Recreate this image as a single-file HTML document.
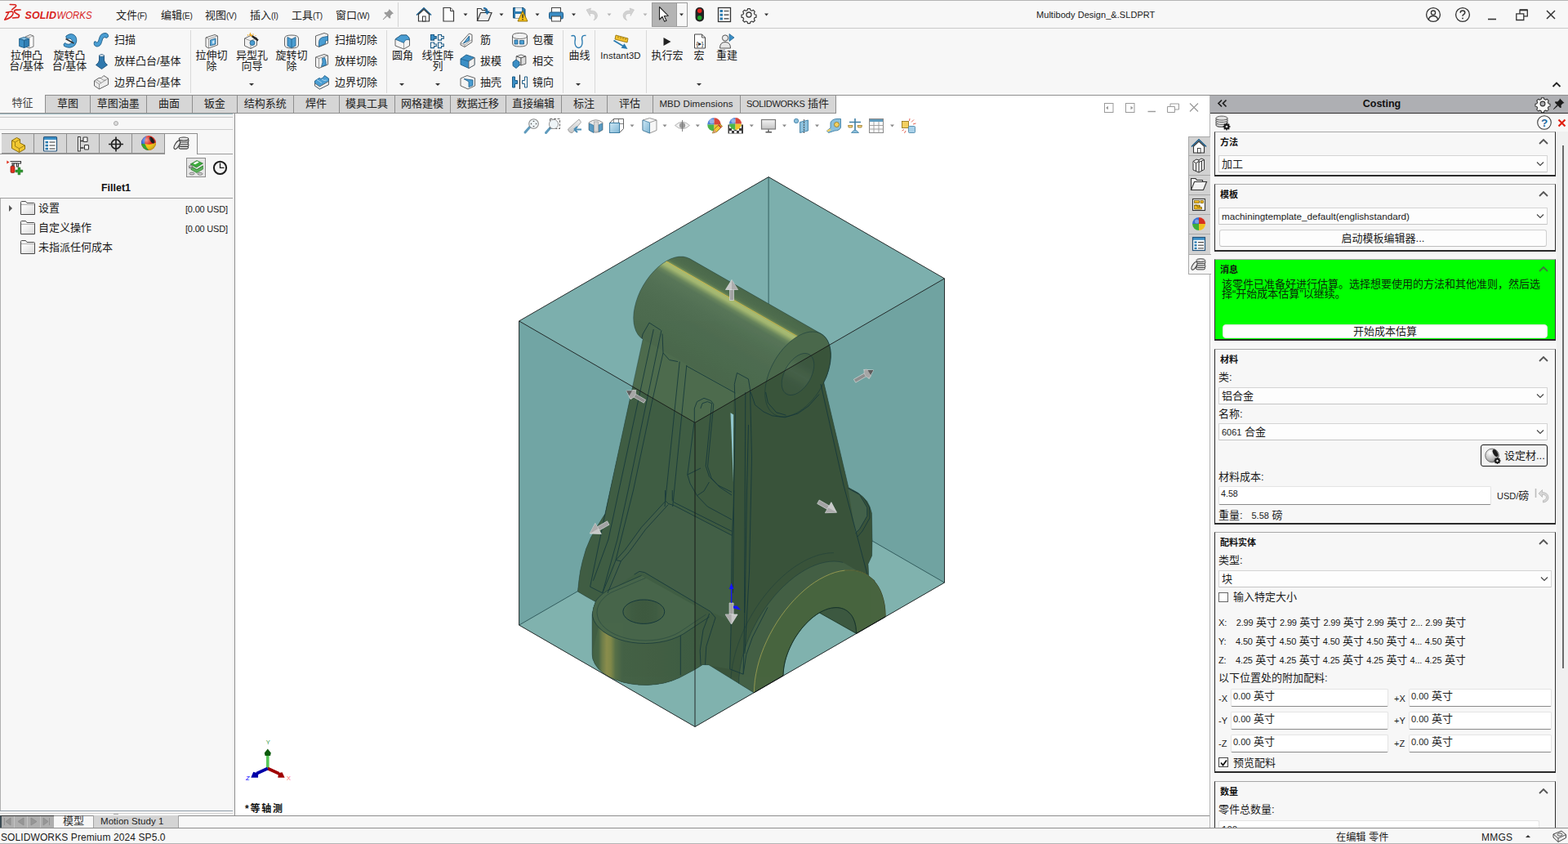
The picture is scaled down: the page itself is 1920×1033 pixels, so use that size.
<!DOCTYPE html>
<html lang="zh-CN">
<head>
<meta charset="utf-8">
<title>SOLIDWORKS Premium 2024 SP5.0 - Multibody Design_&amp;.SLDPRT</title>
<style>
*{box-sizing:border-box;margin:0;padding:0}
html,body{width:1920px;height:1033px;overflow:hidden;background:#f7f7f7}
body{position:relative;font-family:"Liberation Sans","Noto Sans CJK SC",sans-serif;font-size:13px;color:#1a1a1a;line-height:1}
.abs{position:absolute}
.t{position:absolute;white-space:nowrap;line-height:16px;height:16px}
.c{text-align:center}
svg{position:absolute;overflow:visible}
/* title bar */
#topline{left:0;top:0;width:1920px;height:1px;background:#b4b4b4}
#titlebar{left:0;top:1px;width:1920px;height:33px;background:#f7f7f7}
#tbline{left:0;top:34px;width:1920px;height:1px;background:#c9c9c9}
.menu{font-size:13px;top:11px}
.menu small{font-size:10px;letter-spacing:-0.3px}
/* ribbon */
#ribbon{left:0;top:35px;width:1920px;height:81px;background:#f7f7f7}
.vsep{position:absolute;width:1px;background:#d9d9d9;top:37px;height:77px}
.big{position:absolute;text-align:center;line-height:13px;font-size:13px;white-space:nowrap}
.sm{position:absolute;line-height:16px;font-size:13px;white-space:nowrap}
.dd{position:absolute;width:0;height:0;border-left:3px solid transparent;border-right:3px solid transparent;border-top:3.5px solid #333}
/* command tabs */
#tabrow{left:0;top:116px;width:1024px;height:23px;background:#f7f7f7}
.tab{position:absolute;top:116px;height:23px;background:#d6d6d6;border:1px solid #8e8e8e;border-left:none;font-size:13px;line-height:20px;text-align:center;white-space:nowrap;color:#222}
.tab.first{border-left:1px solid #8e8e8e}
.tab.act{background:#f7f7f7;border:none;color:#444}
</style>
</head>
<body>
<div class="abs" id="titlebar"></div>
<div class="abs" id="topline"></div>
<div class="abs" id="tbline"></div>
<!-- logo -->
<svg style="left:5px;top:4px" width="110" height="24" viewBox="0 0 110 24">
 <g fill="none" stroke="#d8211c" stroke-width="1.500" stroke-linecap="round" stroke-linejoin="round">
  <path d="M7.200 1.500 L13.500 1.800 Q15.300 2.100 14.400 3.900 L9.600 7.800"/>
  <path d="M2.400 11.300 L9.400 9.900 Q12 10.500 10.600 14 Q8 18.500 0.700 20.200 L5.900 11"/>
  <path d="M20 8 L14.500 8.200 Q12.300 8.600 12.600 10.600 Q13 11.800 18 14.200 Q19.200 15.500 17.500 17.300 L10.500 18" stroke-width="1.700"/>
 </g>
 <text x="25.5" y="18.800" font-family="Liberation Sans,sans-serif" font-size="13.2" font-weight="bold" font-style="italic" fill="#d8211c" letter-spacing="0.1" textLength="38.5" lengthAdjust="spacingAndGlyphs">SOLID</text>
 <text x="64.500" y="18.800" font-family="Liberation Sans,sans-serif" font-size="13.2" font-style="italic" fill="#d8211c" textLength="43" lengthAdjust="spacingAndGlyphs">WORKS</text>
</svg>
<!-- menus -->
<div class="t menu" style="left:142px">文件<small>(F)</small></div>
<div class="t menu" style="left:197px">编辑<small>(E)</small></div>
<div class="t menu" style="left:251px">视图<small>(V)</small></div>
<div class="t menu" style="left:306px">插入<small>(I)</small></div>
<div class="t menu" style="left:357px">工具<small>(T)</small></div>
<div class="t menu" style="left:411px">窗口<small>(W)</small></div>
<!-- pin -->
<svg style="left:468px;top:10px" width="15" height="15" viewBox="0 0 15 15"><g fill="#9a9a9a"><path d="M8.5 1 L14 6.5 L12.3 7 L10 9.3 L10.3 12.2 L8.8 12.4 L2.6 6.2 L2.8 4.7 L5.7 5 L8 2.7Z"/><path d="M5.2 9.2 L1 14 L5.8 9.8Z" stroke="#9a9a9a" stroke-width="1"/></g></svg>
<div class="abs" style="left:487px;top:3px;width:1px;height:30px;background:#d4d4d4"></div>
<!-- quick access icons -->
<svg style="left:0;top:0" width="960" height="35" viewBox="0 0 960 35">
 <!-- home -->
 <g fill="none" stroke="#1e5f8c" stroke-width="1.6" stroke-linejoin="miter"><path d="M510 18.5 L519 9.8 L528 18.5"/></g>
 <path d="M512.5 17.5 L519 11.5 L525.5 17.5 V26 H512.5Z" fill="#fff" stroke="#333" stroke-width="1.2"/>
 <rect x="517.5" y="20" width="3.6" height="6" fill="#fff" stroke="#333" stroke-width="1"/>
 <!-- new -->
 <path d="M543 9.5 H551.5 L555.5 13.5 V26 H543Z" fill="#fdfdfd" stroke="#3a3a3a" stroke-width="1.2"/>
 <path d="M551.5 9.5 V13.5 H555.5" fill="#e6e6e6" stroke="#3a3a3a" stroke-width="1"/>
 <path d="M567.5 16.5 h5 l-2.5 3z" fill="#333"/>
 <!-- open -->
 <path d="M584.5 25.5 V10.5 H589 L590.5 12.5 H596 V14" fill="#f4f4f4" stroke="#3a3a3a" stroke-width="1.2"/>
 <path d="M584.5 25.5 L588.5 15.5 H602 L598 25.5Z" fill="#ededed" stroke="#3a3a3a" stroke-width="1.2"/>
 <path d="M592 9 Q597 9 597.5 13.5 L600 13.5 L596.5 18 L593 13.5 L595.3 13.5 Q595 11 592 11Z" fill="#1f6aa0"/>
 <path d="M611.5 16.5 h5 l-2.5 3z" fill="#333"/>
 <!-- save w/ warning -->
 <path d="M628.5 9.5 H641 L643 11.5 V22 H628.5Z" fill="#2d7db3" stroke="#1e4e70" stroke-width="1"/>
 <rect x="631" y="9.5" width="8" height="4.5" fill="#e8eef2"/><rect x="631" y="17" width="9" height="5" fill="#f4f4f4"/>
 <path d="M640 13.5 L646 26 H634Z" fill="#f7c21a" stroke="#8a6a00" stroke-width="0.9"/>
 <rect x="639.4" y="17.5" width="1.3" height="4.5" fill="#222"/><rect x="639.4" y="23" width="1.3" height="1.4" fill="#222"/>
 <path d="M655.5 16.5 h5 l-2.5 3z" fill="#333"/>
 <!-- print -->
 <rect x="675.5" y="9.5" width="11" height="6" fill="#fafafa" stroke="#444" stroke-width="1"/>
 <rect x="672.5" y="15" width="17" height="8" rx="1.5" fill="#3a8cc4" stroke="#1d5a86" stroke-width="1"/>
 <rect x="675.5" y="20" width="11" height="6" fill="#fafafa" stroke="#444" stroke-width="1"/>
 <path d="M700 16.5 h5 l-2.5 3z" fill="#333"/>
 <!-- undo -->
 <path d="M718 12 L723.5 10 L722.5 13 Q731 12.5 731.5 19 Q731.5 23 727 25 Q729.5 22 728.5 19 Q727.5 16 722 16.5 L722.5 19.5Z" fill="#d2d2d2" stroke="#c0c0c0" stroke-width="0.6"/>
 <path d="M743.5 16.5 h5 l-2.5 3z" fill="#b5b5b5"/>
 <!-- redo -->
 <path d="M776.5 12 L771 10 L772 13 Q763.5 12.5 763 19 Q763 23 767.5 25 Q765 22 766 19 Q767 16 772.5 16.5 L772 19.5Z" fill="#d2d2d2" stroke="#c0c0c0" stroke-width="0.6"/>
 <path d="M787.5 16.5 h5 l-2.5 3z" fill="#b5b5b5"/>
 <!-- select -->
 <rect x="798.5" y="3.5" width="43" height="29" fill="#f7f7f7" stroke="#9c9c9c" stroke-width="1"/>
 <rect x="798.5" y="3.5" width="30" height="29" fill="#b4b4b4" stroke="#9c9c9c" stroke-width="1"/>
 <path d="M807.5 8.5 V24 L811 20.5 L813.7 26.3 L816 25.2 L813.3 19.5 L818.3 19.3Z" fill="#fff" stroke="#222" stroke-width="1.1" stroke-linejoin="round"/>
 <path d="M832 16.5 h5 l-2.5 3z" fill="#333"/>
 <!-- traffic light -->
 <rect x="851.5" y="9" width="10.5" height="17.5" rx="5" fill="#222"/>
 <circle cx="856.7" cy="13.3" r="2.7" fill="#e5231b"/><circle cx="856.7" cy="21.8" r="2.7" fill="#1fa52a"/>
 <!-- options list -->
 <rect x="879.5" y="9.5" width="15" height="17" fill="#fdfdfd" stroke="#333" stroke-width="1.3"/>
 <g fill="#2b7bb0"><rect x="881.5" y="12" width="3.5" height="3"/><rect x="881.5" y="16.7" width="3.5" height="3"/><rect x="881.5" y="21.4" width="3.5" height="3"/></g>
 <g stroke="#333" stroke-width="1.2"><path d="M886.5 13.5 h6 M886.5 18.2 h6 M886.5 22.9 h6"/></g>
 <!-- gear -->
 <g transform="translate(917 18)" fill="none" stroke="#3a3a3a" stroke-width="1.3">
  <path d="M-1.6 -8 h3.2 l.5 2.1 l1.8 .8 l1.9 -1.1 l2.2 2.2 l-1.1 1.9 l.8 1.8 l2.1 .5 v3.2 l-2.1 .5 l-.8 1.8 l1.1 1.9 l-2.2 2.2 l-1.9 -1.1 l-1.8 .8 l-.5 2.1 h-3.2 l-.5 -2.1 l-1.8 -.8 l-1.9 1.1 l-2.2 -2.2 l1.1 -1.9 l-.8 -1.8 l-2.1 -.5 v-3.2 l2.1 -.5 l.8 -1.8 l-1.1 -1.9 l2.2 -2.2 l1.9 1.1 l1.8 -.8z" stroke-linejoin="round" transform="scale(0.92)"/>
  <circle r="3"/>
 </g>
 <path d="M936 16.5 h5 l-2.5 3z" fill="#333"/>
</svg>
<!-- doc title -->
<div class="t" style="left:1269px;top:10px;font-size:11px;letter-spacing:0.05px">Multibody Design_&amp;.SLDPRT</div>
<!-- window controls -->
<svg style="left:1740px;top:0" width="180" height="35" viewBox="0 0 180 35" fill="none" stroke="#333" stroke-width="1.3">
 <circle cx="15" cy="18" r="8.400"/><circle cx="15" cy="15.6" r="2.6"/><path d="M9.300 24 Q10.300 19.500 15 19.500 Q19.700 19.500 20.700 24"/>
 <circle cx="51" cy="18" r="8.400"/>
 <path d="M48.2 15.7 Q48.2 13 51 13 Q53.8 13 53.8 15.4 Q53.8 17 52 17.8 Q51 18.3 51 19.8" stroke-width="1.5"/><circle cx="51" cy="22.4" r="0.9" fill="#333" stroke="none"/>
 <path d="M82 23.5 h10" stroke-width="1.6"/>
 <path d="M116.800 16.800 h9 v7.700 h-9z M121 16.500 v-4.300 h9.300 v7.600 h-4.300" stroke-width="1.300"/><path d="M121 12.300 h9.300" stroke-width="2"/>
 <path d="M154 13 l10 10 M164 13 l-10 10" stroke-width="1.5"/>
</svg>
<div class="abs" id="ribbon"></div>
<div class="vsep" style="left:233px"></div>
<div class="vsep" style="left:473px"></div>
<div class="vsep" style="left:689px"></div>
<div class="vsep" style="left:728px"></div>
<div class="vsep" style="left:791px"></div>
<div class="big" style="left:-7.5px;width:80px;top:61px">拉伸凸<br>台/基体</div>
<div class="big" style="left:45.0px;width:80px;top:61px">旋转凸<br>台/基体</div>
<div class="sm" style="left:140px;top:40.5px">扫描</div>
<div class="sm" style="left:140px;top:66.5px">放样凸台/基体</div>
<div class="sm" style="left:140px;top:92.5px">边界凸台/基体</div>
<div class="big" style="left:219.0px;width:80px;top:61px">拉伸切<br>除</div>
<div class="big" style="left:268.5px;width:80px;top:61px">异型孔<br>向导</div>
<div class="big" style="left:317.0px;width:80px;top:61px">旋转切<br>除</div>
<div class="dd" style="left:305px;top:102px"></div>
<div class="sm" style="left:410px;top:40.5px">扫描切除</div>
<div class="sm" style="left:410px;top:66.5px">放样切除</div>
<div class="sm" style="left:410px;top:92.5px">边界切除</div>
<div class="big" style="left:453.0px;width:80px;top:61px">圆角</div>
<div class="dd" style="left:489px;top:102px"></div>
<div class="big" style="left:496.0px;width:80px;top:61px">线性阵<br>列</div>
<div class="dd" style="left:532.5px;top:102px"></div>
<div class="sm" style="left:588px;top:40.5px">筋</div>
<div class="sm" style="left:588px;top:66.5px">拔模</div>
<div class="sm" style="left:588px;top:92.5px">抽壳</div>
<div class="sm" style="left:652px;top:40.5px">包覆</div>
<div class="sm" style="left:652px;top:66.5px">相交</div>
<div class="sm" style="left:652px;top:92.5px">镜向</div>
<div class="big" style="left:669.5px;width:80px;top:61px">曲线</div>
<div class="dd" style="left:705px;top:102px"></div>
<div class="big" style="left:720px;width:80px;top:62px;font-size:11.3px;letter-spacing:0.1px">Instant3D</div>
<div class="big" style="left:777.0px;width:80px;top:61px">执行宏</div>
<div class="big" style="left:816.0px;width:80px;top:61px">宏</div>
<div class="dd" style="left:853px;top:102px"></div>
<div class="big" style="left:850.0px;width:80px;top:61px">重建</div>
<svg style="left:1899px;top:98px" width="14" height="10" viewBox="0 0 14 10"><path d="M2.5 8 L7 3.5 L11.5 8" fill="none" stroke="#222" stroke-width="1.8"/></svg>
<svg style="left:0;top:0" width="960" height="116" viewBox="0 0 960 116"><path d="M31 45 L37 42.5 L41 44 V57 L36 59 L31 57Z" fill="#fafafa" stroke="#666" stroke-width="0.9" stroke-linejoin="round"/><path d="M36 45.5 V59 M31 45 L36 45.5 L41 44" fill="none" stroke="#888" stroke-width="0.7"/><polygon points="29.5,45.5 35.35,47.46625 29.5,49.4325 23.65,47.46625" fill="#8cc4e6" stroke="#1d5c87" stroke-width="0.9" stroke-linejoin="round"/><polygon points="23.65,47.46625 29.5,49.4325 29.5,58.5 23.65,56.53375" fill="#3b8fc6" stroke="#1d5c87" stroke-width="0.9" stroke-linejoin="round"/><polygon points="35.35,47.46625 29.5,49.4325 29.5,58.5 35.35,56.53375" fill="#2f7fb5" stroke="#1d5c87" stroke-width="0.9" stroke-linejoin="round"/><path d="M81 44 Q88 39 92.5 44.5 Q95.5 50 91.5 55.5 Q86 60.5 78.5 56.5 Q77 54 79.5 52.5 Q84 56 87.5 52.5 Q89.5 49.5 87 47.5 Q84.5 46.5 82.5 47.5 Q80 46 81 44Z" fill="#4a9dd2" stroke="#1d5c87" stroke-width="0.9"/><path d="M80.5 47.5 L90.5 53" stroke="#333" stroke-width="1.5"/><path d="M115.5 51 Q114 56 118.5 57 Q123 57 124.5 51.5 Q125.5 45.5 128 45.5 Q131 47.5 132.5 45 Q133 41 129 40.5 Q123 40.5 121.5 47 Q120.5 52.5 118.5 52 Q117 50 115.5 51Z" fill="#4a9dd2" stroke="#1d5c87" stroke-width="0.9"/><path d="M121.5 68 Q124.5 65.5 127.5 68 V74 Q128 77 131.5 79.5 L124.5 84.5 L117.5 79.5 Q121 77 121.5 74Z" fill="#2f78ad" stroke="#1d4f77" stroke-width="0.9"/><ellipse cx="124.5" cy="68" rx="3" ry="1.3" fill="#e8eef2" stroke="#1d4f77" stroke-width="0.6"/><path d="M115.5 99 L121 95.5 Q124 97 127 92.5 L132.5 96 V103.5 L121.5 109 L115.5 105Z" fill="#ececec" stroke="#555" stroke-width="0.9" stroke-linejoin="round"/><path d="M115.5 99 L121.5 103 L132.5 96 M121.5 103 V109 M118 97.5 L124 101.5 M124 96.5 Q127 99 129.5 98" fill="none" stroke="#777" stroke-width="0.7"/><path d="M252 46 L263 42.5 L266.5 44 V55 L255.5 59 L252 57Z" fill="#f4f4f4" stroke="#555" stroke-width="0.9" stroke-linejoin="round"/><path d="M255.5 47.5 L266.5 44 M255.5 47.5 V59 M252 46 L255.5 47.5" fill="none" stroke="#777" stroke-width="0.7"/><path d="M257.5 49 L264 47 V54 L257.5 56Z" fill="#5aa7d8" stroke="#1d5c87" stroke-width="0.8"/><path d="M260 50 L262.5 49.3 V53 L260 53.7Z" fill="#cfe6f5"/><path d="M299.5 47 L307 43.5 L314.5 46.5 V55.5 L307 59.5 L299.5 56Z" fill="#f1f1f1" stroke="#555" stroke-width="0.9" stroke-linejoin="round"/><path d="M299.5 47 L307 50 L314.5 46.5 M307 50 V59.5" fill="none" stroke="#777" stroke-width="0.7"/><circle cx="309" cy="52.5" r="3" fill="#4a9dd2" stroke="#1d5c87" stroke-width="0.8"/><path d="M308.5 44 L316 49.5" stroke="#222" stroke-width="2.2"/><path d="M305.5 41.8 L308.8 44.2" stroke="#e9a21b" stroke-width="2.2"/><g fill="#e9a21b"><circle cx="303.5" cy="43" r="0.8"/><circle cx="306.5" cy="40.8" r="0.7"/><circle cx="310" cy="42" r="0.7"/><circle cx="313" cy="43.5" r="0.6"/></g><path d="M348.5 47 Q348.5 43 357 43 Q365.5 43 365.5 47 V55 Q365.5 59 357 59 Q348.5 59 348.5 55Z" fill="#f1f1f1" stroke="#555" stroke-width="0.9"/><path d="M352 45.5 L357 48 L362 45.5 V56 L357 58.5 L352 56Z" fill="#4a9dd2" stroke="#1d5c87" stroke-width="0.8"/><path d="M357 48 V58.5" stroke="#1d5c87" stroke-width="0.8"/><path d="M386.5 44 L397 40.5 L401.5 42 V53 L390.5 57.5 L386.5 55.5Z" fill="#f1f1f1" stroke="#555" stroke-width="0.9" stroke-linejoin="round"/><path d="M390.5 57 V52 Q390.5 45.5 398 45 L401.5 44.5 V49.5 L398.5 50 V53.5Z" fill="#4a9dd2" stroke="#1d5c87" stroke-width="0.8"/><path d="M386.5 70 L397 66.5 L401.5 68 V79 L390.5 83.5 L386.5 81.5Z" fill="#f1f1f1" stroke="#555" stroke-width="0.9" stroke-linejoin="round"/><path d="M390.5 71.5 V83.5 M386.5 70 L390.5 71.5 L401.5 68" fill="none" stroke="#777" stroke-width="0.7"/><path d="M393.5 81.5 Q396 76 394.5 71.5 L397.5 70.5 Q399.5 75 399.5 79.5Z" fill="#4a9dd2" stroke="#1d5c87" stroke-width="0.8"/><path d="M385.5 99 L391 95.5 Q394 98 397.5 92.5 L402.5 96 V103.5 L391.5 109 L385.5 105Z" fill="#4a9dd2" stroke="#1d5c87" stroke-width="0.9" stroke-linejoin="round"/><path d="M385.5 102 L391.5 106 L402.5 99.5 V103.5 L391.5 109 L385.5 105Z" fill="#f1f1f1" stroke="#555" stroke-width="0.8" stroke-linejoin="round"/><path d="M388 97.5 L394 101.5 M394 97 Q397 99.5 400 98" fill="none" stroke="#bfe0f3" stroke-width="0.8"/><path d="M484 48 L491 43 H498 Q501.5 45.5 501.5 49 V56 L494.5 60 L484 56Z" fill="#f4f4f4" stroke="#555" stroke-width="0.9" stroke-linejoin="round"/><path d="M484 48 L491 43 H498 Q501.5 45.5 501.5 49 Q496 47 494.5 52.5 L484 48Z" fill="#4a9dd2" stroke="#1d5c87" stroke-width="0.8" stroke-linejoin="round"/><path d="M494.5 52.5 V60" stroke="#777" stroke-width="0.7"/><g fill="#fafafa" stroke="#1d5c87" stroke-width="1.1" stroke-linejoin="miter"><path d="M536.5 42.5 h4 v2 h2.8 v2.6 h-2.8 v2 h-4z M527.5 52 h4 v2 h2.8 v2.6 h-2.8 v2 h-4z M536.5 52 h4 v2 h2.8 v2.6 h-2.8 v2 h-4z"/></g><path d="M527.5 42.5 h4 v2 h2.8 v2.6 h-2.8 v2 h-4z" fill="#3b8fc6" stroke="#1d5c87" stroke-width="1.1"/><path d="M564 52.500 L574.500 41 L578 42.500 V51.500 L569 57.500 L564 55Z" fill="#f1f1f1" stroke="#555" stroke-width="0.9" stroke-linejoin="round"/><path d="M564 52.500 L569 55 V57.500 M569 55 L578 48.500" fill="none" stroke="#777" stroke-width="0.700"/><path d="M567.500 53 L574.500 44 V49.500Z" fill="#5aa7d8" stroke="#1d5c87" stroke-width="0.900"/><path d="M564 72 L571 67 L581 70.5 V79.5 L574 83.5 L564 79Z" fill="#3b8fc6" stroke="#1d5c87" stroke-width="0.9" stroke-linejoin="round"/><path d="M574 75 L581 70.5 V79.5 L574 83.5Z" fill="#f1f1f1" stroke="#555" stroke-width="0.8"/><path d="M564 72 L574 75" stroke="#1d5c87" stroke-width="0.8"/><path d="M564 96 L572 92.5 L581.5 95.5 V105 L573 109 L564 105Z" fill="#f4f4f4" stroke="#555" stroke-width="0.9" stroke-linejoin="round"/><path d="M568 96.5 L579 98 V104.5 L574 106.5 V100Z" fill="#4a9dd2" stroke="#1d5c87" stroke-width="0.8"/><path d="M627.5 44 Q627.5 40.5 636.5 40.5 Q645.5 40.5 645.5 44 V53 Q645.5 57 636.5 57 Q627.5 57 627.5 53Z" fill="#f1f1f1" stroke="#555" stroke-width="0.9"/><path d="M627.5 44 Q627.5 47.5 636.5 47.5 Q645.5 47.5 645.5 44" fill="none" stroke="#555" stroke-width="0.8"/><path d="M630 49 h4 v5 h-4z M636.5 49.5 h5 v4.5 h-5z" fill="#4a9dd2" stroke="#1d5c87" stroke-width="0.8"/><polygon points="638,67.0 643.85,68.96625 638,70.9325 632.15,68.96625" fill="#fafafa" stroke="#555" stroke-width="0.9" stroke-linejoin="round"/><polygon points="632.15,68.96625 638,70.9325 638,80.0 632.15,78.03375" fill="#e9e9e9" stroke="#555" stroke-width="0.9" stroke-linejoin="round"/><polygon points="643.85,68.96625 638,70.9325 638,80.0 643.85,78.03375" fill="#dcdcdc" stroke="#555" stroke-width="0.9" stroke-linejoin="round"/><path d="M628 76 L632 73 L636 76 V80 L632 83.5 L628 80.5Z" fill="#3b8fc6" stroke="#1d5c87" stroke-width="0.9"/><path d="M636.5 91.5 V109" stroke="#222" stroke-width="1.1"/><path d="M627.5 94 h3 v4.500 h3 v4 h-3 v4.500 h-3z" fill="#3b8fc6" stroke="#1d5c87" stroke-width="1"/><path d="M645.5 94 h-3 v4.500 h-3 v4 h3 v4.500 h3z" fill="#f2f2f2" stroke="#1d5c87" stroke-width="1"/><path d="M699.5 44 Q704.5 42 704.5 47.5 Q703 54 705.5 57 Q708.5 60 711.5 57 Q714 54 712.5 47.5 Q712.5 42.5 717.5 43.5" fill="none" stroke="#2b7bb0" stroke-width="1.4"/><path d="M754 43 L769 47 L768 52 L753 48Z" fill="#f4c430" stroke="#8a6a00" stroke-width="0.8"/><path d="M757 44.5 v2 M760 45.3 v2 M763 46.1 v2 M766 46.9 v2" stroke="#6b5200" stroke-width="0.7"/><path d="M751.5 49.5 L764 57" stroke="#2b7bb0" stroke-width="1.8"/><path d="M768.5 60 L760.5 58.8 L764.5 53.2Z" fill="#2b7bb0"/><path d="M812.5 46 L821.5 51 L812.5 56Z" fill="#222"/><path d="M850.5 42 H859.5 L863.5 46 V59 H850.5Z" fill="#fdfdfd" stroke="#444" stroke-width="1"/><path d="M859.5 42 V46 H863.5" fill="none" stroke="#444" stroke-width="0.9"/><text x="857" y="55.5" font-family="Liberation Sans,sans-serif" font-size="7.500" text-anchor="middle" fill="#222">{&#9656;}</text><circle cx="888" cy="46.5" r="3.6" fill="#ececec" stroke="#555" stroke-width="1"/><path d="M881.5 59 Q881.5 51.5 888 51.5 Q894.5 51.5 894.5 59Z" fill="#e6e6e6" stroke="#555" stroke-width="1"/><path d="M893 41.5 L899 46 L893 50.5Z" fill="#3b8fc6" stroke="#1d5c87" stroke-width="0.7"/></svg>
<div class="abs" id="tabrow"></div>
<div class="tab act" style="left:0px;width:55px">特征</div>
<div class="tab first" style="left:55px;width:56px">草图</div>
<div class="tab" style="left:111px;width:68.5px">草图油墨</div>
<div class="tab" style="left:179.5px;width:56.0px">曲面</div>
<div class="tab" style="left:235.5px;width:55.5px">钣金</div>
<div class="tab" style="left:291px;width:68.5px">结构系统</div>
<div class="tab" style="left:359.5px;width:56.0px">焊件</div>
<div class="tab" style="left:415.5px;width:68.0px">模具工具</div>
<div class="tab" style="left:483.5px;width:68.0px">网格建模</div>
<div class="tab" style="left:551.5px;width:68.0px">数据迁移</div>
<div class="tab" style="left:619.5px;width:68.0px">直接编辑</div>
<div class="tab" style="left:687.5px;width:56.0px">标注</div>
<div class="tab" style="left:743.5px;width:56.0px">评估</div>
<div class="tab" style="left:799.5px;width:107.0px;font-size:11.5px;letter-spacing:0.1px">MBD Dimensions</div>
<div class="tab" style="left:906.5px;width:117.0px;font-size:13px"><span style="font-size:11px;letter-spacing:-0.3px">SOLIDWORKS</span> 插件</div>
<div class="abs" style="left:0;top:138px;width:56px;height:1px;background:#8e8e8e"></div>
<!-- left panel -->

<div class="abs" style="left:0;top:139px;width:288px;height:859px;background:#f7f7f7"></div>
<div class="abs" style="left:0;top:139px;width:286px;height:1px;background:#9fbcc4"></div><div class="abs" style="left:0;top:140px;width:286px;height:3px;background:#f2f2f2"></div><div class="abs" style="left:0;top:143px;width:285px;height:1px;background:#c6c6c6"></div>
<div class="abs" style="left:287px;top:139px;width:1px;height:859px;background:#909090"></div><div class="abs" style="left:285px;top:139px;width:2px;height:859px;background:#efefef"></div>
<div class="abs" style="left:139px;top:148px;width:6px;height:6px;border-radius:50%;border:1px solid #a8a8a8;background:#dcdcdc"></div>
<div class="abs" style="left:0;top:158px;width:285px;height:1px;background:#cdcdcd"></div>
<!-- manager tabs -->
<div class="abs" style="left:0;top:188px;width:285px;height:1px;background:#9a9a9a"></div>
<div class="abs" style="left:2px;top:163px;width:200px;height:25px;background:#d6d6d6;border-top:1px solid #8a8a8a;border-bottom:1px solid #8e8e8e"></div>
<div class="abs" style="left:41px;top:164px;width:1px;height:24px;background:#8e8e8e"></div>
<div class="abs" style="left:81px;top:164px;width:1px;height:24px;background:#8e8e8e"></div>
<div class="abs" style="left:121px;top:164px;width:1px;height:24px;background:#8e8e8e"></div>
<div class="abs" style="left:161px;top:164px;width:1px;height:24px;background:#8e8e8e"></div>
<div class="abs" style="left:201px;top:163px;width:41px;height:26px;background:#f7f7f7;border:1px solid #8e8e8e;border-bottom:none"></div>
<svg style="left:0;top:160px" width="288" height="60" viewBox="0 160 288 60">
 <!-- feature tree icon (yellow part) -->
 <path d="M14.5 172 L20.5 168.5 L24.5 170.5 V175 L30.5 178 V182.5 L23.5 186.5 L14.5 181.5Z" fill="#f2c832" stroke="#8a6d10" stroke-width="1" stroke-linejoin="round"/>
 <path d="M14.5 172 L18.5 174 L24.5 170.5 M18.5 174 V179 L23.5 181.8 L30.5 178 M23.5 181.8 V186.5" fill="none" stroke="#8a6d10" stroke-width="0.8"/>
 <!-- property manager -->
 <rect x="53.5" y="167.5" width="16" height="17.5" rx="1" fill="#fdfdfd" stroke="#23527a" stroke-width="1.2"/>
 <rect x="54" y="168" width="15" height="3" fill="#3b8fc6"/>
 <g fill="#2b7bb0"><rect x="55.5" y="172.8" width="3.5" height="2.6"/><rect x="55.5" y="176.8" width="3.5" height="2.6"/><rect x="55.5" y="180.8" width="3.5" height="2.6"/></g>
 <path d="M60.5 174 h7 M60.5 178 h7 M60.5 182 h7" stroke="#333" stroke-width="1.1"/>
 <!-- config manager -->
 <rect x="95.500" y="167.500" width="2.800" height="17.500" fill="#fdfdfd" stroke="#333" stroke-width="1"/>
 <path d="M98.500 172.500 h4 M98.500 181 h4" stroke="#333" stroke-width="1.600"/>
 <g fill="#fafafa" stroke="#333" stroke-width="1.100"><rect x="102" y="168" width="5" height="5.500" rx="0.800"/><rect x="103.500" y="177.500" width="5" height="5.500" rx="0.800"/></g>
 <!-- dimxpert -->
 <g fill="none" stroke="#222" stroke-width="1.7"><circle cx="142" cy="176.5" r="5.6"/><path d="M142 167.500 v18 M133 176.500 h18"/></g>
 <!-- display manager -->
 <defs><radialGradient id="ballg" cx="0.35" cy="0.3" r="0.75"><stop offset="0" stop-color="#fff" stop-opacity="0.55"/><stop offset="0.5" stop-color="#fff" stop-opacity="0"/><stop offset="1" stop-color="#000" stop-opacity="0.25"/></radialGradient><clipPath id="ballc"><circle cx="182" cy="175" r="9"/></clipPath></defs>
 <g clip-path="url(#ballc)"><rect x="172" y="165" width="20" height="20" fill="#e02418"/>
 <path d="M172 165 H180 Q176.500 171 177.500 176 H172Z" fill="#2a62d8"/>
 <path d="M172 176 H177.500 Q179 181 184 185 H172Z" fill="#2aa52a"/>
 <path d="M177.500 176 Q184 178 192 174 V186 H184 Q179 181 177.500 176Z" fill="#f2c410"/></g>
 <ellipse cx="186" cy="171.500" rx="2.300" ry="4.600" transform="rotate(-35 186 171.500)" fill="#161616"/>
 <circle cx="182" cy="175" r="9" fill="url(#ballg)"/>
 <!-- costing icon -->
 <g fill="#e9e9e9" stroke="#3a3a3a" stroke-width="1.100"><rect x="219" y="178.500" width="11.500" height="3.600" rx="1.800"/><rect x="219.500" y="175.800" width="11.500" height="3.600" rx="1.800"/><rect x="219" y="173.100" width="11.500" height="3.600" rx="1.800"/><rect x="219.500" y="170.400" width="11.500" height="3.600" rx="1.800"/><ellipse cx="225" cy="170" rx="5.800" ry="2"/><ellipse cx="216.800" cy="177.300" rx="2.400" ry="5.800" transform="rotate(32 216.800 177.300)"/></g>
 <!-- fire/add icon -->
 <path d="M8.300 196.500 L11.500 198.500 L8.300 200.500Z" fill="#e0301e"/>
 <path d="M12.500 197.500 H25.500 V200 H22.500 V204 H20.500 V200 H17 V203.500 M14 199.800 h8" fill="none" stroke="#333" stroke-width="1.1"/>
 <rect x="13" y="203" width="5" height="8.500" rx="1.500" fill="#e0301e" stroke="#7a1a10" stroke-width="0.700"/><rect x="14.500" y="200.500" width="2" height="2.800" fill="#444"/>
 <path d="M19 208 h3 v-3 h2.800 v3 h3 v2.800 h-3 v3 h-2.800 v-3 h-3z" fill="#2a9a2a" stroke="#176317" stroke-width="0.500"/>
 <!-- money button -->
 <rect x="228.500" y="193.500" width="23" height="23" fill="#e6e6e6" stroke="#8c8c8c" stroke-width="1"/>
 <g><path d="M233 201 L241 196.500 L248.500 200 L240.500 205Z" fill="#3dab3d" stroke="#1c6a1c" stroke-width="0.600"/><path d="M236.500 200 L241.300 197.300 L243.800 198.500 L239 201.300Z" fill="#fff"/>
 <path d="M234 203.500 L241 207.500 L248.500 202.800 V207 L241 211.500 L234 207.500Z" fill="#2f9a2f" stroke="#1c6a1c" stroke-width="0.600"/>
 <path d="M234.500 205.200 L241 209 L248.500 204.500 M234.500 206.700 L241 210.500 L248.500 206" fill="none" stroke="#b6e0b6" stroke-width="0.500"/>
 <g fill="#d9d9d9" stroke="#555" stroke-width="0.700"><ellipse cx="235" cy="212.500" rx="3" ry="1.400"/><ellipse cx="245" cy="212.800" rx="3" ry="1.400"/><ellipse cx="233.500" cy="205" rx="2.200" ry="1.100"/><ellipse cx="233.500" cy="203.500" rx="2.200" ry="1.100"/></g></g>
 <!-- clock -->
 <circle cx="269.500" cy="205.300" r="8.600" fill="#000" opacity="0.150"/><circle cx="269.500" cy="205.300" r="7.600" fill="#f4f4f4" stroke="#1c1c1c" stroke-width="2"/><path d="M269.500 199.500 V205.300 H274.500" fill="none" stroke="#1c1c1c" stroke-width="1.300"/>
</svg>
<div class="t c" style="left:42px;width:200px;top:222px;font-weight:bold;font-size:12.5px;color:#111">Fillet1</div>
<div class="abs" style="left:0;top:242px;width:285px;height:1px;background:#9e9e9e"></div>
<div class="abs" style="left:0;top:243px;width:1px;height:750px;background:#b0b0b0"></div>
<!-- tree -->
<svg style="left:0;top:243px" width="288" height="75" viewBox="0 243 288 75">
 <path d="M11 251 L15 255 L11 259Z" fill="#555"/>
 <g id="fold"><path d="M25.500 262.500 V247.500 Q25.500 246.500 26.500 246.500 H31.500 L33 248.500 H41.500 Q42.500 248.500 42.500 249.500 V262.500Z" fill="#f4f4f4" stroke="#4a4a4a" stroke-width="1" stroke-linejoin="round"/><path d="M26 250.500 H42" stroke="#9a9a9a" stroke-width="0.800"/><rect x="26.200" y="251" width="15.800" height="11" fill="url(#fg)"/></g>
 <defs><linearGradient id="fg" x1="0" y1="0" x2="1" y2="1"><stop offset="0" stop-color="#ffffff"/><stop offset="1" stop-color="#dadada"/></linearGradient></defs>
 <use href="#fold" y="24"/><use href="#fold" y="48"/>
</svg>
<div class="t" style="left:47px;top:247px">设置</div>
<div class="t" style="left:47px;top:271px">自定义操作</div>
<div class="t" style="left:47px;top:295px">未指派任何成本</div>
<div class="t" style="left:227px;top:248px;font-size:11px;letter-spacing:-0.2px">[0.00 USD]</div>
<div class="t" style="left:227px;top:272px;font-size:11px;letter-spacing:-0.2px">[0.00 USD]</div>
<!-- bottom of panel -->
<div class="abs" style="left:0;top:992px;width:285px;height:1px;background:#8d9aa6"></div>
<div class="abs" style="left:0;top:995px;width:285px;height:1px;background:#d0d0d0"></div>
<div class="abs" style="left:139px;top:996px;width:6px;height:1px;background:#aaa"></div>
<!-- bottom tabs row -->
<div class="abs" style="left:0;top:998px;width:1482px;height:1px;background:#8e8e8e"></div>
<div class="abs" style="left:0;top:999px;width:1482px;height:14px;background:#f7f7f7"></div>
<div class="abs" style="left:0px;top:998px;width:66px;height:15px;background:#aeaeae;border-top:1px solid #3a3a3a;border-left:2px solid #3a4a52"></div>
<svg style="left:0;top:998px" width="70" height="15" viewBox="0 0 70 15"><g fill="#969696" stroke="#8a8a8a" stroke-width="0.800"><path d="M5.500 3 v9 M13 3 L7 7.500 L13 12Z"/><path d="M29 3 L22 7.500 L29 12Z"/><path d="M38 3 L45 7.500 L38 12Z"/><path d="M53 3 L59 7.500 L53 12Z M60.500 3 v9"/></g><path d="M17.500 1 v14 M33.500 1 v14 M49.500 1 v14" stroke="#c4c4c4" stroke-width="1"/></svg>
<div class="abs c" style="left:66px;top:998px;width:48px;height:15px;line-height:14px;font-size:13px;color:#333">模型</div>
<div class="abs" style="left:114px;top:998px;width:105px;padding-left:8px;height:16px;line-height:14px;font-size:11.5px;background:#d4d4d4;border:1px solid #a3a3a3;border-top:none;color:#222;letter-spacing:0.05px">Motion Study 1</div>
<div class="abs" style="left:1023px;top:116px;width:897px;height:1px;background:#8e8e8e"></div>
<div class="abs" id="vp" style="left:288px;top:139px;width:1193px;height:859px;background:#fff"></div>
<div class="abs" style="left:1024px;top:117px;width:457px;height:22px;background:#fff"></div>
<svg style="left:288px;top:139px" width="1193" height="858" viewBox="288 139 1193 858">
<defs>
<clipPath id="sil"><path d="M844.5 316.6 L840.5 314.9 L836.2 314.1 L831.4 314.1 L826.4 315.0 L821.3 316.8 L816.0 319.5 L810.7 322.9 L805.6 327.1 L800.6 331.9 L795.9 337.3 L791.5 343.2 L787.5 349.6 L784.0 356.1 L781.1 362.9 L778.8 369.7 L777.1 376.4 L776.0 383.0 L775.7 389.3 L776.0 395.1 L777.1 400.5 L778.8 405.3 L781.1 409.4 L784.0 412.8 L787.5 415.4 L787.0 416.0 L740.8 629.0 L732.0 643.0 L723.4 658.0 L717.5 672.0 L713.2 687.0 L710.5 699.0 L708.9 710.3 L707.4 724.0 L718.0 730.3 L729.2 736.5 L726.6 744.0 L725.0 752.4 L725.0 800.5 L725.8 806.6 L728.4 812.6 L732.5 818.2 L738.1 823.4 L745.1 828.0 L753.2 831.8 L762.3 834.9 L772.1 837.0 L782.4 838.2 L792.9 838.5 L803.3 837.7 L813.4 836.0 L822.8 833.3 L831.4 829.8 L850.0 820.0 L860.5 813.5 L868.0 813.8 L923.0 847.8 L958.4 826.9 L959.0 827.1 L959.3 821.6 L960.0 815.8 L961.2 809.9 L962.9 803.9 L965.0 797.9 L967.6 791.9 L970.5 786.0 L973.8 780.3 L977.5 774.8 L981.4 769.6 L985.6 764.7 L990.0 760.3 L994.5 756.3 L999.1 752.7 L1003.8 749.7 L1008.5 747.3 L1013.1 745.5 L1017.6 744.3 L1022.0 743.7 L1026.2 743.7 L1030.1 744.4 L1033.8 745.7 L1037.1 747.6 L1040.0 750.1 L1042.6 753.1 L1044.7 756.7 L1046.4 760.8 L1047.6 765.3 L1048.3 770.2 L1048.6 775.4 L1084.2 754.9 L1084.2 754.9 L1084.0 750.1 L1083.7 745.5 L1083.2 741.0 L1082.4 736.7 L1081.4 732.5 L1080.2 728.6 L1078.8 724.8 L1077.2 721.3 L1075.4 718.0 L1073.4 714.9 L1071.2 712.0 L1071.0 710.7 L1063.7 704.9 L1063.0 690.3 L1067.6 680.2 L1068.1 661.3 L1067.4 628.0 L1065.0 620.0 L1061.6 613.4 L1056.0 607.5 L1050.7 603.2 L1039.0 596.7 L1008.6 467.6 L1011.7 461.7 L1013.2 457.4 L1014.6 453.1 L1015.6 448.9 L1016.5 444.7 L1017.0 440.6 L1017.3 436.6 L1017.3 432.8 L1017.0 429.1 L1016.4 425.6 L1015.6 422.4 L1014.5 419.4 L1013.2 416.6 L1011.6 414.2 L1009.8 412.0 L1007.8 410.2 L1005.5 408.6Z"/></clipPath>
<linearGradient id="cylg" gradientUnits="userSpaceOnUse" x1="844.5" y1="316.6" x2="787.5" y2="415.4"><stop offset="0" stop-color="#4a684a"/><stop offset="0.080" stop-color="#4e6c4d"/><stop offset="0.120" stop-color="#55734f"/><stop offset="0.140" stop-color="#6d8a56"/><stop offset="0.150" stop-color="#96ac66"/><stop offset="0.160" stop-color="#a8bb72"/><stop offset="0.190" stop-color="#a2b670"/><stop offset="0.215" stop-color="#869f66"/><stop offset="0.245" stop-color="#67845c"/><stop offset="0.285" stop-color="#587658"/><stop offset="0.420" stop-color="#527054"/><stop offset="0.600" stop-color="#4e6c50"/><stop offset="0.800" stop-color="#4c6a4e"/><stop offset="1" stop-color="#4a684c"/></linearGradient>
<linearGradient id="lugw" gradientUnits="userSpaceOnUse" x1="724" y1="0" x2="850" y2="0"><stop offset="0" stop-color="#426044"/><stop offset="0.070" stop-color="#486646"/><stop offset="0.105" stop-color="#6c7c49"/><stop offset="0.150" stop-color="#8a8d4c"/><stop offset="0.190" stop-color="#808849"/><stop offset="0.235" stop-color="#566f47"/><stop offset="0.300" stop-color="#456246"/><stop offset="1" stop-color="#3f5c42"/></linearGradient>
<linearGradient id="holeg" gradientUnits="userSpaceOnUse" x1="1001" y1="416" x2="953" y2="500"><stop offset="0" stop-color="#3d5a40"/><stop offset="0.350" stop-color="#48664a"/><stop offset="0.500" stop-color="#557356"/><stop offset="0.620" stop-color="#4a684c"/><stop offset="1" stop-color="#3d5a40"/></linearGradient>
</defs>
<polygon points="941.1,216.6 1156.5,340.9 1156.5,713.1 851.0,889.5 635.6,765.1 635.6,392.9" fill="#7aadab"/>
<polygon points="941.1,216.6 1156.5,340.9 851.0,517.3 635.6,392.9" fill="#7cafad"/>
<polygon points="635.6,392.9 851.0,517.3 851.0,889.5 635.6,765.1" fill="#71a5a4"/>
<polygon points="851.0,517.3 1156.5,340.9 1156.5,713.1 851.0,889.5" fill="#70a3a1"/>
<polygon points="941.1,588.7 1156.5,713.1 851.0,889.5 635.6,765.1" fill="#80b2ae"/>
<g stroke="#1d4547" stroke-width="0.9" fill="none" opacity="0.85"><path d="M941.1 216.6 L941.1 588.7"/><path d="M635.6 765.1 L941.1 588.7 L1156.5 713.1"/></g>
<g clip-path="url(#sil)">
<rect x="690" y="300" width="420" height="570" fill="#4e6c4e"/>
<polygon points="635.6,392.9 851.0,517.3 851.0,889.5 635.6,765.1" fill="#405d43"/>
<polygon points="851.0,517.3 1156.5,340.9 1156.5,713.1 851.0,889.5" fill="#3a543b"/>
<polygon points="850.9,480 898,480 897.5,600 895,773 893.7,818.9 864,813.8 850.9,822" fill="#3f5b41" clip-path="url(#rightc)"/>
<polygon points="814.5,613.8 825.8,618.9 896.2,655.3 895,760 869.8,748.4 789.3,700.6 776.7,703.1 744,725.8 754.1,685.5 765.4,673 785.5,645.3" fill="#446249" opacity="0.75"/>
</g>
<clipPath id="topc"><polygon points="941.1,216.6 1156.5,340.9 851.0,517.3 635.6,392.9"/></clipPath>
<clipPath id="leftc"><polygon points="635.6,392.9 851.0,517.3 851.0,889.5 635.6,765.1"/></clipPath>
<clipPath id="rightc"><polygon points="851.0,517.3 1156.5,340.9 1156.5,713.1 851.0,889.5"/></clipPath>
<g clip-path="url(#sil)"><g clip-path="url(#topc)"><path d="M844.5 316.6 L840.5 314.9 L836.2 314.1 L831.4 314.1 L826.4 315.0 L821.3 316.8 L816.0 319.5 L810.7 322.9 L805.6 327.1 L800.6 331.9 L795.9 337.3 L791.5 343.2 L787.5 349.6 L784.0 356.1 L781.1 362.9 L778.8 369.7 L777.1 376.4 L776.0 383.0 L775.7 389.3 L776.0 395.1 L777.1 400.5 L778.8 405.3 L781.1 409.4 L784.0 412.8 L787.5 415.4 L948.5 507.4 L948.5 507.4 L952.5 509.1 L956.8 509.9 L961.6 509.9 L966.6 509.0 L971.7 507.2 L977.0 504.5 L982.3 501.1 L987.4 496.9 L992.4 492.1 L997.1 486.7 L1001.5 480.8 L1005.5 474.4 L1009.0 467.9 L1011.9 461.1 L1014.2 454.3 L1015.9 447.6 L1017.0 441.0 L1017.3 434.7 L1017.0 428.9 L1015.9 423.5 L1014.2 418.7 L1011.9 414.6 L1009.0 411.2 L1005.5 408.6Z" fill="url(#cylg)"/></g></g>
<path d="M815.5 319.8 L976.5 411.8" stroke="#f0bc3c" stroke-width="0.9" stroke-dasharray="1.6 0.7" fill="none"/>
<g clip-path="url(#topc)"><path d="M1005.5 408.6 L1008.3 410.6 L1010.8 413.1 L1012.9 416.1 L1014.6 419.6 L1015.9 423.5 L1016.8 427.7 L1017.2 432.3 L1017.2 437.2 L1016.8 442.3 L1015.9 447.6 L1014.6 452.9 L1012.9 458.4 L1010.8 463.8 L1008.3 469.2 L1005.5 474.4 L1002.4 479.5 L998.9 484.4 L995.3 488.9 L991.4 493.1 L987.4 496.9 L983.3 500.3 L979.1 503.3 L974.9 505.7 L970.7 507.6 L966.6 509.0 L962.6 509.8 L958.7 510.0 L955.0 509.7 L951.6 508.8 L948.5 507.4 L945.7 505.4 L943.2 502.9 L941.1 499.9 L939.4 496.4 L938.1 492.5 L937.2 488.3 L936.8 483.7 L936.8 478.8 L937.2 473.7 L938.1 468.4 L939.4 463.1 L941.1 457.6 L943.2 452.2 L945.7 446.8 L948.5 441.6 L951.6 436.5 L955.1 431.6 L958.7 427.1 L962.6 422.9 L966.6 419.1 L970.7 415.7 L974.9 412.7 L979.1 410.3 L983.3 408.4 L987.4 407.0 L991.4 406.2 L995.3 406.0 L999.0 406.3 L1002.4 407.2Z" fill="#4b694c"/></g>
<g clip-path="url(#rightc)"><path d="M1005.5 408.6 L1008.3 410.6 L1010.8 413.1 L1012.9 416.1 L1014.6 419.6 L1015.9 423.5 L1016.8 427.7 L1017.2 432.3 L1017.2 437.2 L1016.8 442.3 L1015.9 447.6 L1014.6 452.9 L1012.9 458.4 L1010.8 463.8 L1008.3 469.2 L1005.5 474.4 L1002.4 479.5 L998.9 484.4 L995.3 488.9 L991.4 493.1 L987.4 496.9 L983.3 500.3 L979.1 503.3 L974.9 505.7 L970.7 507.6 L966.6 509.0 L962.6 509.8 L958.7 510.0 L955.0 509.7 L951.6 508.8 L948.5 507.4 L945.7 505.4 L943.2 502.9 L941.1 499.9 L939.4 496.4 L938.1 492.5 L937.2 488.3 L936.8 483.7 L936.8 478.8 L937.2 473.7 L938.1 468.4 L939.4 463.1 L941.1 457.6 L943.2 452.2 L945.7 446.8 L948.5 441.6 L951.6 436.5 L955.1 431.6 L958.7 427.1 L962.6 422.9 L966.6 419.1 L970.7 415.7 L974.9 412.7 L979.1 410.3 L983.3 408.4 L987.4 407.0 L991.4 406.2 L995.3 406.0 L999.0 406.3 L1002.4 407.2Z" fill="#3a553b"/></g>
<path d="M991.0 433.8 L993.0 435.3 L994.6 437.4 L995.8 440.1 L996.6 443.1 L996.8 446.6 L996.6 450.3 L995.8 454.2 L994.6 458.2 L993.0 462.2 L991.0 466.1 L988.6 469.8 L986.0 473.2 L983.1 476.2 L980.1 478.8 L977.0 480.9 L973.9 482.4 L970.9 483.3 L968.0 483.6 L965.4 483.2 L963.0 482.2 L961.0 480.7 L959.4 478.6 L958.2 475.9 L957.4 472.9 L957.2 469.4 L957.4 465.7 L958.2 461.8 L959.4 457.8 L961.0 453.8 L963.0 449.9 L965.4 446.2 L968.0 442.8 L970.9 439.8 L973.9 437.2 L977.0 435.1 L980.1 433.6 L983.1 432.7 L986.0 432.4 L988.6 432.8Z" fill="url(#holeg)"/>
<g clip-path="url(#rightc)"><path d="M991.0 433.8 L993.0 435.3 L994.6 437.4 L995.8 440.1 L996.6 443.1 L996.8 446.6 L996.6 450.3 L995.8 454.2 L994.6 458.2 L993.0 462.2 L991.0 466.1 L988.6 469.8 L986.0 473.2 L983.1 476.2 L980.1 478.8 L977.0 480.9 L973.9 482.4 L970.9 483.3 L968.0 483.6 L965.4 483.2 L963.0 482.2 L961.0 480.7 L959.4 478.6 L958.2 475.9 L957.4 472.9 L957.2 469.4 L957.4 465.7 L958.2 461.8 L959.4 457.8 L961.0 453.8 L963.0 449.9 L965.4 446.2 L968.0 442.8 L970.9 439.8 L973.9 437.2 L977.0 435.1 L980.1 433.6 L983.1 432.7 L986.0 432.4 L988.6 432.8Z" fill="#2a4030" opacity="0.35"/></g>
<path d="M1005.5 408.6 L1008.3 410.6 L1010.8 413.1 L1012.9 416.1 L1014.6 419.6 L1015.9 423.5 L1016.8 427.7 L1017.2 432.3 L1017.2 437.2 L1016.8 442.3 L1015.9 447.6 L1014.6 452.9 L1012.9 458.4 L1010.8 463.8 L1008.3 469.2 L1005.5 474.4 L1002.4 479.5 L998.9 484.4 L995.3 488.9 L991.4 493.1 L987.4 496.9 L983.3 500.3 L979.1 503.3 L974.9 505.7 L970.7 507.6 L966.6 509.0 L962.6 509.8 L958.7 510.0 L955.0 509.7 L951.6 508.8 L948.5 507.4 L945.7 505.4 L943.2 502.9 L941.1 499.9 L939.4 496.4 L938.1 492.5 L937.2 488.3 L936.8 483.7 L936.8 478.8 L937.2 473.7 L938.1 468.4 L939.4 463.1 L941.1 457.6 L943.2 452.2 L945.7 446.8 L948.5 441.6 L951.6 436.5 L955.1 431.6 L958.7 427.1 L962.6 422.9 L966.6 419.1 L970.7 415.7 L974.9 412.7 L979.1 410.3 L983.3 408.4 L987.4 407.0 L991.4 406.2 L995.3 406.0 L999.0 406.3 L1002.4 407.2Z" fill="none" stroke="#16383c" stroke-width="0.7" opacity="0.8"/>
<path d="M991.0 433.8 L993.0 435.3 L994.6 437.4 L995.8 440.1 L996.6 443.1 L996.8 446.6 L996.6 450.3 L995.8 454.2 L994.6 458.2 L993.0 462.2 L991.0 466.1 L988.6 469.8 L986.0 473.2 L983.1 476.2 L980.1 478.8 L977.0 480.9 L973.9 482.4 L970.9 483.3 L968.0 483.6 L965.4 483.2 L963.0 482.2 L961.0 480.7 L959.4 478.6 L958.2 475.9 L957.4 472.9 L957.2 469.4 L957.4 465.7 L958.2 461.8 L959.4 457.8 L961.0 453.8 L963.0 449.9 L965.4 446.2 L968.0 442.8 L970.9 439.8 L973.9 437.2 L977.0 435.1 L980.1 433.6 L983.1 432.7 L986.0 432.4 L988.6 432.8Z" fill="none" stroke="#16383c" stroke-width="0.7" opacity="0.8"/>
<g clip-path="url(#sil)">
<g clip-path="url(#leftc)"><path d="M868.6 755.0 L836.3 776.2 L829.9 779.5 L822.9 782.3 L815.3 784.5 L807.3 786.1 L799.0 787.1 L790.5 787.5 L782.0 787.2 L773.6 786.3 L765.6 784.7 L757.9 782.5 L750.8 779.8 L744.4 776.6 L738.7 772.9 L733.9 768.7 L730.1 764.3 L727.3 759.6 L725.6 754.7 L725.0 749.8 L725.5 744.8 L727.1 739.9 L729.8 735.2 L733.5 730.7 L738.1 726.6 L743.7 722.8 L725.0 800.5 L743.7 774.8 L738.1 778.6 L733.5 782.7 L729.8 787.2 L727.1 791.9 L725.5 796.8 L725.0 801.8 L725.6 806.7 L727.3 811.6 L730.1 816.3 L733.9 820.7 L738.7 824.9 L744.4 828.6 L750.8 831.8 L757.9 834.5 L765.6 836.7 L773.6 838.3 L782.0 839.2 L790.5 839.5 L799.0 839.1 L807.3 838.1 L815.3 836.5 L822.9 834.3 L829.9 831.5 L836.3 828.2 L868.6 807.0Z" fill="url(#lugw)"/></g>
<g clip-path="url(#leftc)"><path d="M868.6 755.0 L836.3 776.2 L829.9 779.5 L822.9 782.3 L815.3 784.5 L807.3 786.1 L799.0 787.1 L790.5 787.5 L782.0 787.2 L773.6 786.3 L765.6 784.7 L757.9 782.5 L750.8 779.8 L744.4 776.6 L738.7 772.9 L733.9 768.7 L730.1 764.3 L727.3 759.6 L725.6 754.7 L725.0 749.8 L725.5 744.8 L727.1 739.9 L729.8 735.2 L733.5 730.7 L738.1 726.6 L743.7 722.8 L785.5 704.4 L868.6 751.0Z" fill="#48664a"/></g>
<g clip-path="url(#rightc)"><path d="M868.6 755.0 L836.3 776.2 L829.9 779.5 L822.9 782.3 L815.3 784.5 L807.3 786.1 L799.0 787.1 L790.5 787.5 L782.0 787.2 L773.6 786.3 L765.6 784.7 L757.9 782.5 L750.8 779.8 L744.4 776.6 L738.7 772.9 L733.9 768.7 L730.1 764.3 L727.3 759.6 L725.6 754.7 L725.0 749.8 L725.5 744.8 L727.1 739.9 L729.8 735.2 L733.5 730.7 L738.1 726.6 L743.7 722.8 L785.5 704.4 L868.6 751.0Z" fill="#3f5b41"/></g>
<linearGradient id="lhg" gradientUnits="userSpaceOnUse" x1="763" y1="0" x2="814" y2="0"><stop offset="0" stop-color="#486448"/><stop offset="0.2" stop-color="#405c42"/><stop offset="0.5" stop-color="#3e5a40"/><stop offset="0.8" stop-color="#405c42"/><stop offset="1" stop-color="#486448"/></linearGradient>
<path d="M813.7 748.7 L813.3 751.3 L812.2 753.7 L810.3 756.1 L807.8 758.1 L804.6 760.0 L801.0 761.4 L797.0 762.5 L792.7 763.2 L788.3 763.4 L783.9 763.2 L779.6 762.5 L775.6 761.4 L772.0 760.0 L768.8 758.1 L766.3 756.1 L764.4 753.7 L763.3 751.3 L762.9 748.7 L763.3 746.1 L764.4 743.7 L766.3 741.4 L768.8 739.3 L772.0 737.4 L775.6 736.0 L779.6 734.9 L783.9 734.2 L788.3 734.0 L792.7 734.2 L797.0 734.9 L801.0 736.0 L804.6 737.4 L807.8 739.3 L810.3 741.4 L812.2 743.7 L813.3 746.1Z" fill="url(#lhg)" stroke="#16383c" stroke-width="1"/>
<clipPath id="lhc"><path d="M813.7 748.7 L813.3 751.3 L812.2 753.7 L810.3 756.1 L807.8 758.1 L804.6 760.0 L801.0 761.4 L797.0 762.5 L792.7 763.2 L788.3 763.4 L783.9 763.2 L779.6 762.5 L775.6 761.4 L772.0 760.0 L768.8 758.1 L766.3 756.1 L764.4 753.7 L763.3 751.3 L762.9 748.7 L763.3 746.1 L764.4 743.7 L766.3 741.4 L768.8 739.3 L772.0 737.4 L775.6 736.0 L779.6 734.9 L783.9 734.2 L788.3 734.0 L792.7 734.2 L797.0 734.9 L801.0 736.0 L804.6 737.4 L807.8 739.3 L810.3 741.4 L812.2 743.7 L813.3 746.1Z"/></clipPath>
<path d="M868.6 755.0 L836.3 776.2 L829.9 779.5 L822.9 782.3 L815.3 784.5 L807.3 786.1 L799.0 787.1 L790.5 787.5 L782.0 787.2 L773.6 786.3 L765.6 784.7 L757.9 782.5 L750.8 779.8 L744.4 776.6 L738.7 772.9 L733.9 768.7 L730.1 764.3 L727.3 759.6 L725.6 754.7 L725.0 749.8 L725.5 744.8 L727.1 739.9 L729.8 735.2 L733.5 730.7 L738.1 726.6 L743.7 722.8 L785.5 704.4" fill="none" stroke="#16383c" stroke-width="0.8" opacity="0.9"/>
<path d="M864.6 752.0 L832.0 773.7 L826.3 776.7 L819.9 779.3 L813.0 781.3 L805.7 782.8 L798.1 783.7 L790.4 784.0 L782.7 783.7 L775.1 782.9 L767.8 781.5 L760.9 779.5 L754.4 777.0 L748.6 774.1 L743.5 770.7 L739.1 767.0 L735.7 762.9 L733.1 758.7 L731.6 754.3 L731.0 749.8 L731.4 745.2 L732.9 740.8 L735.3 736.5 L738.7 732.5 L742.9 728.7 L748.0 725.3 L790.5 707.4" fill="none" stroke="#16383c" stroke-width="0.6" opacity="0.7"/>
</g>
<path d="M1084.2 754.9 L1083.9 747.8 L1083.2 741.0 L1081.9 734.6 L1080.2 728.6 L1078.0 723.0 L1075.4 718.0 L1072.3 713.4 L1068.8 709.4 L1064.9 705.9 L1060.6 703.1 L1056.0 700.8 L1051.0 699.2 L1045.8 698.2 L1040.3 697.8 L1034.5 698.1 L1028.6 699.0 L1022.6 700.5 L1016.4 702.7 L1010.1 705.5 L1003.8 708.8 L997.5 712.7 L991.2 717.2 L985.0 722.2 L979.0 727.7 L973.0 733.6 L967.3 740.0 L961.8 746.7 L956.6 753.7 L951.6 761.1 L947.0 768.7 L942.7 776.5 L938.8 784.5 L935.3 792.5 L932.2 800.6 L929.5 808.8 L927.4 816.8 L925.7 824.8 L924.4 832.6 L923.7 840.3 L923.4 847.7 L959.0 827.1 L959.2 823.0 L959.6 818.7 L960.3 814.4 L961.2 809.9 L962.4 805.4 L963.9 800.9 L965.6 796.4 L967.6 791.9 L969.7 787.5 L972.1 783.1 L974.7 778.9 L977.5 774.8 L980.4 770.9 L983.5 767.1 L986.7 763.6 L990.0 760.3 L993.3 757.2 L996.8 754.4 L1000.3 751.9 L1003.8 749.7 L1007.3 747.9 L1010.8 746.3 L1014.2 745.1 L1017.6 744.3 L1020.9 743.8 L1024.1 743.6 L1027.2 743.8 L1030.1 744.4 L1032.9 745.3 L1035.5 746.6 L1037.8 748.2 L1040.0 750.1 L1042.0 752.3 L1043.7 754.8 L1045.2 757.7 L1046.4 760.8 L1047.3 764.1 L1048.0 767.7 L1048.4 771.5 L1048.6 775.4Z" fill="#48643f"/>
<g clip-path="url(#sil)"><path d="M1051.0 699.2 L1045.8 698.2 L1040.3 697.8 L1034.5 698.1 L1028.6 699.0 L1022.6 700.5 L1016.4 702.7 L1010.1 705.5 L1003.8 708.8 L997.5 712.7 L991.2 717.2 L985.0 722.2 L979.0 727.7 L973.0 733.6 L967.3 740.0 L961.8 746.7 L956.6 753.7 L951.6 761.1 L947.0 768.7 L942.7 776.5 L938.8 784.5 L935.3 792.5 L932.2 800.6 L929.5 808.8 L927.4 816.8 L925.7 824.8 L924.4 832.6 L923.7 840.3 L923.4 847.7 L904.7 836.9 L904.9 829.5 L905.7 821.8 L906.9 814.0 L908.6 806.0 L910.8 797.9 L913.5 789.8 L916.5 781.7 L920.0 773.6 L924.0 765.7 L928.2 757.9 L932.9 750.3 L937.8 742.9 L943.1 735.9 L948.6 729.1 L954.3 722.8 L960.2 716.9 L966.3 711.4 L972.5 706.4 L978.8 701.9 L985.1 698.0 L991.4 694.6 L997.6 691.9 L1003.8 689.7 L1009.9 688.2 L1015.8 687.3 L1021.5 687.0 L1027.0 687.4 L1032.3 688.4Z" fill="#456247" opacity="0.9"/></g>
<path d="M1032.3 688.4 L1027.0 687.4 L1021.5 687.0 L1015.8 687.3 L1009.9 688.2 L1003.8 689.7 L997.6 691.9 L991.4 694.6 L985.1 698.0 L978.8 701.9 L972.5 706.4 L966.3 711.4 L960.2 716.9 L954.3 722.8 L948.6 729.1 L943.1 735.9 L937.8 742.9 L932.9 750.3 L928.2 757.9 L924.0 765.7 L920.0 773.6 L916.5 781.7 L913.5 789.8 L910.8 797.9 L908.6 806.0 L906.9 814.0 L905.7 821.8 L904.9 829.5 L904.7 836.9" fill="none" stroke="#16383c" stroke-width="0.7" opacity="0.7"/>
<g clip-path="url(#sil)"><path d="M1020.9 676.6 L1014.7 676.9 L1008.3 677.9 L1001.7 679.5 L995.0 681.9 L988.3 684.8 L981.5 688.5 L974.6 692.7 L967.9 697.5 L961.2 702.9 L954.6 708.9 L948.2 715.3 L942.0 722.1 L936.1 729.4 L930.4 737.0 L925.1 745.0 L920.1 753.2 L915.4 761.6 L911.2 770.2 L907.4 778.9 L904.1 787.7 L901.2 796.5 L898.9 805.2 L897.0 813.8 L895.7 822.3 L894.9 830.5 L894.6 838.5" fill="none" stroke="#16383c" stroke-width="0.7" opacity="0.6"/></g>
<path d="M1048.6 775.4 L1048.5 772.7 L1048.3 770.1 L1048.0 767.6 L1047.6 765.2 L1047.0 762.9 L1046.4 760.7 L1045.6 758.6 L1044.7 756.6 L1043.6 754.8 L1042.5 753.0 L1041.3 751.4 L1039.9 750.0 L1038.5 748.7 L1037.0 747.5 L1035.3 746.5 L1033.6 745.6 L1031.8 744.9 L1029.9 744.3 L1028.0 743.9 L1026.0 743.7 L1023.9 743.6 L1021.8 743.7 L1019.6 743.9 L1017.4 744.3 L1015.1 744.9 L1012.8 745.6 L1010.5 746.5 L1008.1 747.5 L1005.8 748.6 L1003.4 750.0Z" fill="#3c5840"/>
<path d="M1084.2 754.9 L1083.9 747.8 L1083.2 741.0 L1081.9 734.6 L1080.2 728.6 L1078.0 723.0 L1075.4 718.0 L1072.3 713.4 L1068.8 709.4 L1064.9 705.9 L1060.6 703.1 L1056.0 700.8 L1051.0 699.2 L1045.8 698.2 L1040.3 697.8 L1034.5 698.1 L1028.6 699.0 L1022.6 700.5 L1016.4 702.7 L1010.1 705.5 L1003.8 708.8 L997.5 712.7 L991.2 717.2 L985.0 722.2 L979.0 727.7 L973.0 733.6 L967.3 740.0 L961.8 746.7 L956.6 753.7 L951.6 761.1 L947.0 768.7 L942.7 776.5 L938.8 784.5 L935.3 792.5 L932.2 800.6 L929.5 808.8 L927.4 816.8 L925.7 824.8 L924.4 832.6 L923.7 840.3 L923.4 847.7" fill="none" stroke="#b9b558" stroke-width="0.9" opacity="0.75"/>
<path d="M1084.2 754.9 L1083.9 747.8 L1083.2 741.0 L1081.9 734.6 L1080.2 728.6 L1078.0 723.0 L1075.4 718.0 L1072.3 713.4 L1068.8 709.4 L1064.9 705.9 L1060.6 703.1 L1056.0 700.8 L1051.0 699.2 L1045.8 698.2 L1040.3 697.8 L1034.5 698.1" fill="none" stroke="#1b2b1b" stroke-width="0.8" opacity="0.7"/>
<path d="M959.0 827.1 L959.2 823.0 L959.6 818.7 L960.3 814.4 L961.2 809.9 L962.4 805.4 L963.9 800.9 L965.6 796.4 L967.6 791.9 L969.7 787.5 L972.1 783.1 L974.7 778.9 L977.5 774.8 L980.4 770.9 L983.5 767.1 L986.7 763.6 L990.0 760.3 L993.3 757.2 L996.8 754.4 L1000.3 751.9 L1003.8 749.7 L1007.3 747.9 L1010.8 746.3 L1014.2 745.1 L1017.6 744.3 L1020.9 743.8 L1024.1 743.6 L1027.2 743.8 L1030.1 744.4 L1032.9 745.3 L1035.5 746.6 L1037.8 748.2 L1040.0 750.1 L1042.0 752.3 L1043.7 754.8 L1045.2 757.7 L1046.4 760.8 L1047.3 764.1 L1048.0 767.7 L1048.4 771.5 L1048.6 775.4" fill="none" stroke="#16301f" stroke-width="0.9"/>
<path d="M923.4 847.7 L959.0 827.1" stroke="#111" stroke-width="0.9"/>
<path d="M1084.2 754.9 L1048.6 775.4" stroke="#111" stroke-width="0.9"/>
<path d="M1048.6 775.4 L1003.4 750.0" stroke="#16301f" stroke-width="0.8"/>
<g clip-path="url(#sil)"><path d="M1038.3 597.6 L1052.7 605.5 L1061.8 621.2 L1061.8 631.6 L1052.7 647.3 L1047.5 652.5 Z" fill="#44624a"/></g>
<g clip-path="url(#sil)" fill="none" stroke="#16383c" stroke-width="1" opacity="0.85">
<path d="M795.0 395.0 L787.0 409.0 L763.0 520.0 L742.8 620.0 L722.6 718.2 L737.7 725.8"/>
<path d="M795.0 395.0 L809.0 404.0"/>
<path d="M800.3 403.0 L757.9 600.0 L745.0 660.0 L726.4 710.7"/>
<path d="M809.9 404.3 L769.2 600.0 L756.0 660.0 L737.7 725.8"/>
<path d="M811.0 408.5 L812.0 432.0 L798.0 493.7 L775.5 600.0 L754.0 685.5"/>
<path d="M812.0 432.0 L819.5 440.5 L830.0 442.6"/>
<path d="M832.2 442.6 L814.0 620.0"/>
<path d="M840.8 446.9 L823.7 620.0"/>
<path d="M840.8 448.0 L900.4 481.0"/>
<path d="M902.5 456.4 L899.3 470.3 L900.4 504.4 L898.3 620.0 L896.2 660.0 L895.0 773.6 L893.7 818.9 L910.1 825.2"/>
<path d="M902.5 456.4 L916.4 463.9 L918.5 476.7 L920.5 560.0 L917.5 700.0 L912.0 800.0"/>
<path d="M916.5 520.0 L914.5 600.0 L912.5 725.8 L910.1 825.2"/>
<path d="M910.1 825.2 L913.8 801.3 L921.4 779.9 L940.0 743.4"/>
<path d="M898.7 600.0 L897.5 725.8"/>
<path d="M850.3 515.0 L850.3 500.0 L853.5 491.6 L862.0 487.3 L870.6 490.5 L873.8 494.8"/>
<path d="M850.3 515.0 L841.8 581.0 L845.0 591.7 L853.5 606.6 L866.3 620.0 L896.0 636.0"/>
<path d="M857.8 500.0 L860.0 493.7 L866.3 491.6 L871.6 493.7 L864.2 570.4 L868.4 583.2 L879.0 593.8 L896.0 602.3"/>
<path d="M873.8 494.8 L866.5 571.0 L871.0 585.0 L881.0 596.0 L896.0 606.0"/>
<path d="M841.8 581.0 L848.0 578.0 L858.0 573.0"/>
<path d="M853.5 606.6 L862.0 601.0 L868.4 590.0"/>
<path d="M814.5 600.0 L814.5 612.6 L818.2 616.4 L825.8 618.9 L896.2 655.3"/>
<path d="M823.3 600.0 L823.3 612.6 L825.8 615.1 L896.2 650.3"/>
<path d="M814.5 613.8 L785.5 645.3 L765.4 673.0 L754.1 685.5 L737.7 725.8"/>
<path d="M818.2 617.6 L790.6 647.8 L770.4 675.5 L760.4 686.8 L744.0 725.8"/>
<path d="M754.1 685.5 L760.4 686.8"/>
<path d="M776.7 703.1 L783.0 699.4 L789.3 700.6 L869.8 748.4 L876.1 756.0 L873.6 763.5 L864.8 791.2 L863.5 813.8"/>
<path d="M868.6 751.0 L861.0 771.0 L857.2 796.2 L858.0 813.8"/>
<path d="M833.3 778.0 L833.3 826.4"/>
<path d="M1005.0 470.0 L1033.0 594.0 L1062.0 703.0"/>
<path d="M919.3 480.0 L924.6 495.7 L935.0 504.0 L945.5 508.8 L961.2 510.8 L976.9 506.1 L990.0 497.0 L1003.0 482.6"/>
<path d="M937.6 480.0 L940.3 493.0 L950.7 504.8 L962.5 508.2"/>
<path d="M912.8 480.0 L911.5 750.0"/>
<path d="M1038.3 597.6 L1052.7 605.5 L1061.8 621.2 L1061.8 631.6 L1052.7 647.3 L1047.5 652.5"/>
<path d="M1044.0 600.0 L1055.3 605.5 L1064.5 621.0 L1065.0 634.0 L1056.0 650.0 L1050.0 657.0"/>
</g>
<path d="M894.5 505.2 L898.2 507.5 L898 590 Z" fill="#90c6cc"/>
<path d="M844.5 316.6 L840.5 314.9 L836.2 314.1 L831.4 314.1 L826.4 315.0 L821.3 316.8 L816.0 319.5 L810.7 322.9 L805.6 327.1 L800.6 331.9 L795.9 337.3 L791.5 343.2 L787.5 349.6 L784.0 356.1 L781.1 362.9 L778.8 369.7 L777.1 376.4 L776.0 383.0 L775.7 389.3 L776.0 395.1 L777.1 400.5 L778.8 405.3 L781.1 409.4 L784.0 412.8 L787.5 415.4 L787.0 416.0 L740.8 629.0 L732.0 643.0 L723.4 658.0 L717.5 672.0 L713.2 687.0 L710.5 699.0 L708.9 710.3 L707.4 724.0 L718.0 730.3 L729.2 736.5 L726.6 744.0 L725.0 752.4 L725.0 800.5 L725.8 806.6 L728.4 812.6 L732.5 818.2 L738.1 823.4 L745.1 828.0 L753.2 831.8 L762.3 834.9 L772.1 837.0 L782.4 838.2 L792.9 838.5 L803.3 837.7 L813.4 836.0 L822.8 833.3 L831.4 829.8 L850.0 820.0 L860.5 813.5 L868.0 813.8 L923.0 847.8 L958.4 826.9 L959.0 827.1 L959.3 821.6 L960.0 815.8 L961.2 809.9 L962.9 803.9 L965.0 797.9 L967.6 791.9 L970.5 786.0 L973.8 780.3 L977.5 774.8 L981.4 769.6 L985.6 764.7 L990.0 760.3 L994.5 756.3 L999.1 752.7 L1003.8 749.7 L1008.5 747.3 L1013.1 745.5 L1017.6 744.3 L1022.0 743.7 L1026.2 743.7 L1030.1 744.4 L1033.8 745.7 L1037.1 747.6 L1040.0 750.1 L1042.6 753.1 L1044.7 756.7 L1046.4 760.8 L1047.6 765.3 L1048.3 770.2 L1048.6 775.4 L1084.2 754.9 L1084.2 754.9 L1084.0 750.1 L1083.7 745.5 L1083.2 741.0 L1082.4 736.7 L1081.4 732.5 L1080.2 728.6 L1078.8 724.8 L1077.2 721.3 L1075.4 718.0 L1073.4 714.9 L1071.2 712.0 L1071.0 710.7 L1063.7 704.9 L1063.0 690.3 L1067.6 680.2 L1068.1 661.3 L1067.4 628.0 L1065.0 620.0 L1061.6 613.4 L1056.0 607.5 L1050.7 603.2 L1039.0 596.7 L1008.6 467.6 L1011.7 461.7 L1013.2 457.4 L1014.6 453.1 L1015.6 448.9 L1016.5 444.7 L1017.0 440.6 L1017.3 436.6 L1017.3 432.8 L1017.0 429.1 L1016.4 425.6 L1015.6 422.4 L1014.5 419.4 L1013.2 416.6 L1011.6 414.2 L1009.8 412.0 L1007.8 410.2 L1005.5 408.6Z" fill="none" stroke="#16383c" stroke-width="0.7" opacity="0.55"/>
<g stroke="#141414" stroke-width="0.85" fill="none" stroke-linejoin="round"><polygon points="941.1,216.6 1156.5,340.9 1156.5,713.1 851.0,889.5 635.6,765.1 635.6,392.9"/><path d="M635.6 392.9 L851.0 517.3 L1156.5 340.9"/><path d="M851.0 517.3 L851.0 889.5"/></g>
<path d="M898.5 367.5 L898.5 354.5 L893.5 354.5 L893.5 367.5Z" fill="#a2a2a2" stroke="#d4dada" stroke-width="0.7"/><path d="M896.0 342.5 L903.5 354.5 L888.5 354.5Z" fill="#c8c8c8" stroke="#dde2e2" stroke-width="0.7"/><path d="M896.0 342.5 L903.5 354.5 L896.0 354.5Z" fill="#a0a0a0" opacity="0.7"/>
<path d="M893.1 738.0 L893.1 752.0 L898.1 752.0 L898.1 738.0Z" fill="#a2a2a2" stroke="#d4dada" stroke-width="0.7"/><path d="M895.6 764.0 L888.1 752.0 L903.1 752.0Z" fill="#c8c8c8" stroke="#dde2e2" stroke-width="0.7"/><path d="M895.6 764.0 L888.1 752.0 L895.6 752.0Z" fill="#a0a0a0" opacity="0.7"/>
<path d="M790.6 489.4 L776.8 481.4 L774.5 485.2 L788.4 493.2Z" fill="#8e8e8e" stroke="#d4dada" stroke-width="0.7"/><path d="M767.0 478.3 L778.9 477.7 L772.4 488.9Z" fill="#9a9a9a" stroke="#dde2e2" stroke-width="0.7"/><ellipse cx="774.4" cy="482.6" rx="3.4" ry="5.7" transform="rotate(-150.0 774.4 482.6)" fill="#a6a6a6" stroke="#c8cccc" stroke-width="0.6"/><path d="M767.0 478.3 L774.0 478.2 L770.4 484.4Z" fill="#5c5c5c"/>
<path d="M1047.7 468.2 L1062.0 459.9 L1059.7 456.1 L1045.4 464.3Z" fill="#8e8e8e" stroke="#d4dada" stroke-width="0.7"/><path d="M1069.5 453.0 L1064.1 463.6 L1057.6 452.4Z" fill="#9a9a9a" stroke="#dde2e2" stroke-width="0.7"/><ellipse cx="1062.1" cy="457.3" rx="3.4" ry="5.7" transform="rotate(-30.0 1062.1 457.3)" fill="#a6a6a6" stroke="#c8cccc" stroke-width="0.6"/><path d="M1069.5 453.0 L1066.1 459.1 L1062.5 452.9Z" fill="#5c5c5c"/>
<path d="M1000.7 616.4 L1012.9 623.4 L1015.4 619.0 L1003.2 612.0Z" fill="#a2a2a2" stroke="#d4dada" stroke-width="0.7"/><path d="M1024.5 627.2 L1010.4 627.7 L1017.9 614.7Z" fill="#c8c8c8" stroke="#dde2e2" stroke-width="0.7"/><path d="M1024.5 627.2 L1010.4 627.7 L1014.1 621.2Z" fill="#a0a0a0" opacity="0.7"/>
<path d="M743.5 637.8 L731.3 644.8 L733.8 649.2 L746.0 642.2Z" fill="#a2a2a2" stroke="#d4dada" stroke-width="0.7"/><path d="M722.2 653.0 L728.8 640.5 L736.3 653.5Z" fill="#c8c8c8" stroke="#dde2e2" stroke-width="0.7"/><path d="M722.2 653.0 L728.8 640.5 L732.6 647.0Z" fill="#a0a0a0" opacity="0.7"/>
<path d="M895.6 738 V720" stroke="#1414ff" stroke-width="1.3"/><path d="M895.6 713.5 L898.4 721 H892.8Z" fill="#1414ff"/><path d="M898 741.6 L902.5 741.6 L907 746.6 L898 744.5Z" fill="#1414ff"/>
<g><path d="M327.8 940.5 V924" stroke="#58c858" stroke-width="3.6"/><path d="M327.8 916.500 L331.800 921.500 L331 925 H324.600 L323.800 921.500Z" fill="#0a5a0a"/><path d="M327.8 940.5 L341.500 946.800" stroke="#a00000" stroke-width="3.800"/><path d="M341 946 L345.600 945.200 L348.600 951.800 H340.300Z" fill="#a00000"/><path d="M327.8 940.5 L314.200 946.800" stroke="#0000a8" stroke-width="3.800"/><path d="M310.200 944.800 L316.200 946.500 L316 951.800 H307.300Z" fill="#0000a8"/><text x="328.300" y="910.500" font-family="Liberation Sans,sans-serif" font-size="7.500" text-anchor="middle" fill="#3a9a4a">Y</text><text x="353.400" y="955" font-family="Liberation Sans,sans-serif" font-size="7.500" text-anchor="middle" fill="#ff7070">X</text><text x="303.400" y="955" font-family="Liberation Sans,sans-serif" font-size="7.500" font-weight="bold" font-style="italic" text-anchor="middle" fill="#5050ff">Z</text></g>
</svg>
<div class="t" style="left:300px;top:981.5px;font-size:12px;font-weight:bold;color:#111;letter-spacing:1.8px">*等轴测</div>
<svg style="left:636px;top:140px" width="500" height="30" viewBox="636 140 500 30">
<defs>
<linearGradient id="lb1" x1="0" y1="0" x2="1" y2="1"><stop offset="0" stop-color="#cfe8f5"/><stop offset="1" stop-color="#7fb6d4"/></linearGradient>
<linearGradient id="gr1" x1="0" y1="0" x2="0" y2="1"><stop offset="0" stop-color="#f2f2f2"/><stop offset="1" stop-color="#c4c4c4"/></linearGradient>
</defs>
<!-- zoom to fit -->
<path d="M643 162 L650 154" stroke="#5f9bbd" stroke-width="3" stroke-linecap="round"/>
<circle cx="653.500" cy="151.500" r="5.800" fill="#eef4f7" stroke="#8a8a8a" stroke-width="1.100"/>
<path d="M653.500 147.500 l1.300 1.600 h-2.600z M653.500 155.500 l1.300 -1.600 h-2.600z M649.500 151.500 l1.600 -1.300 v2.600z M657.500 151.500 l-1.600 -1.300 v2.600z" fill="#555"/>
<!-- zoom area -->
<path d="M668.500 162.500 L675 155" stroke="#5f9bbd" stroke-width="3" stroke-linecap="round"/>
<rect x="673.500" y="145.500" width="12" height="12" fill="none" stroke="#555" stroke-width="0.900" stroke-dasharray="3 1.500"/>
<circle cx="678" cy="152" r="5.600" fill="#eef4f7" stroke="#9a9a9a" stroke-width="1"/>
<!-- previous view -->
<path d="M695.500 158 L709 146 L711.500 149.500 L701 162.500 Q696.500 163 695.500 158Z" fill="url(#gr1)" stroke="#9a9a9a" stroke-width="0.900"/>
<path d="M703 158.500 h9 v-0 M703 158.500 l4 -3.500 M703 158.500 l4 3.500" stroke="#4f8fb5" stroke-width="2.200" fill="none"/>
<!-- section view -->
<path d="M721 150 Q729.500 143.500 738 150 V159 Q729.500 165.500 721 159Z" fill="#e9e9e9" stroke="#8a8a8a" stroke-width="0.900"/>
<path d="M721.500 151 L727 153.500 V162.500 L721.500 159.500Z M737.500 151 L733 153 V161.500 L737.500 159Z" fill="#5b9cc4" stroke="#2d6d94" stroke-width="0.700"/>
<rect x="727.500" y="149" width="5" height="12" fill="#d8d8d8" stroke="#9a9a9a" stroke-width="0.600"/>
<!-- view orientation -->
<path d="M746.500 150.500 L751.500 145.500 H763.500 V157.500 L758.500 162.500" fill="#fdfdfd" stroke="#555" stroke-width="0.900"/>
<path d="M751.500 145.500 V150 M757.500 145.500 V150.500 M763.500 151.500 H758.500" stroke="#555" stroke-width="0.700"/>
<rect x="746.500" y="150.500" width="12" height="12" fill="url(#lb1)" stroke="#3f7fa5" stroke-width="1"/>
<path d="M771.500 152.500 h5 l-2.500 3z" fill="#8a8a8a"/>
<!-- display style -->
<path d="M787 147 L795.500 144.500 L804 147 V159.500 L795.500 163 L787 159.500Z" fill="#f6f6f6" stroke="#8a8a8a" stroke-width="0.900"/>
<path d="M787 147 L795.500 150 V163 L787 159.500Z" fill="url(#lb1)" stroke="#3f7fa5" stroke-width="0.800"/>
<path d="M795.500 150 L804 147" stroke="#8a8a8a" stroke-width="0.800"/>
<path d="M811.500 152.500 h5 l-2.500 3z" fill="#8a8a8a"/>
<!-- hide/show -->
<path d="M826.500 153.500 Q835.500 145 844.500 153.500 Q835.500 162 826.500 153.500Z" fill="#f0f0f0" stroke="#b4b4b4" stroke-width="1"/>
<circle cx="835.500" cy="153.500" r="3.600" fill="#9a9a9a"/><path d="M835.500 147 V161" stroke="#777" stroke-width="0.900"/>
<path d="M851.800 152.500 h5 l-2.500 3z" fill="#8a8a8a"/>
<!-- edit appearance -->
<circle cx="874.500" cy="152.500" r="8.300" fill="#e8e8e8"/>
<path d="M874.500 152.500 V144.200 A8.300 8.300 0 0 0 866.200 152.500Z" fill="#4a7fd8"/><path d="M874.500 152.500 H866.200 A8.300 8.300 0 0 0 874.500 160.800Z" fill="#4bb548"/><path d="M874.500 152.500 V160.800 A8.300 8.300 0 0 0 882.800 152.500Z" fill="#f0c428"/><path d="M874.500 152.500 H882.800 A8.300 8.300 0 0 0 874.500 144.200Z" fill="#d8463c"/>
<circle cx="871.500" cy="148.500" r="3" fill="#fff" opacity="0.400"/>
<path d="M872.500 163 L874.500 158 L881.500 151.500 L884.500 154.500 L877.500 161.500Z" fill="#f2c832" stroke="#7a5a10" stroke-width="0.800"/><path d="M872.500 163 L874.500 158 L877.500 161.500Z" fill="#d9a070"/><path d="M880 153 L883 156" stroke="#c04040" stroke-width="1.800"/>
<!-- apply scene -->
<rect x="891.500" y="152.500" width="18.500" height="11" fill="#3c3c3c"/>
<g fill="#f4f4f4"><rect x="893" y="154" width="3" height="3"/><rect x="899" y="154" width="3" height="3"/><rect x="905" y="154" width="3" height="3"/><rect x="896" y="157" width="3" height="3"/><rect x="902" y="157" width="3" height="3"/><rect x="893" y="160" width="3" height="3"/><rect x="899" y="160" width="3" height="3"/><rect x="905" y="160" width="3" height="3"/></g>
<circle cx="900.500" cy="151.500" r="7.500" fill="#e8e8e8"/>
<path d="M900.500 151.500 V144 A7.500 7.500 0 0 0 893 151.500Z" fill="#4a7fd8"/><path d="M900.500 151.500 H893 A7.500 7.500 0 0 0 900.500 159Z" fill="#4bb548"/><path d="M900.500 151.500 V159 A7.500 7.500 0 0 0 908 151.500Z" fill="#f0c428"/><path d="M900.500 151.500 H908 A7.500 7.500 0 0 0 900.500 144Z" fill="#d8463c"/>
<circle cx="898" cy="148" r="2.700" fill="#fff" opacity="0.400"/>
<path d="M917.800 152.500 h5 l-2.500 3z" fill="#8a8a8a"/>
<!-- view settings monitor -->
<rect x="932.500" y="146.500" width="17" height="11.500" fill="url(#gr1)" stroke="#7a7a7a" stroke-width="1.200"/>
<path d="M941 158.500 v3 M937.500 161.800 h7.500" stroke="#555" stroke-width="1.400"/>
<path d="M958 152.500 h5 l-2.500 3z" fill="#8a8a8a"/>
<!-- mate reference -->
<circle cx="975" cy="148" r="2.700" fill="#8cc0dc" stroke="#3f7fa5" stroke-width="0.800"/>
<path d="M979.500 149.500 L989.500 147 V160 L979.500 162.500Z" fill="#8cc0dc" stroke="#3f7fa5" stroke-width="0.900"/><path d="M984.500 146 V163" stroke="#333" stroke-width="0.800" stroke-dasharray="2 1"/>
<path d="M998 152.500 h5 l-2.500 3z" fill="#8a8a8a"/>
<!-- measure -->
<path d="M1017 150 Q1019 145.500 1025 145.500 H1029.500 V156 Q1028 160 1022 160 L1014.500 162.500 L1012.500 160 L1017 156.500Z" fill="#8cc0dc" stroke="#3f7fa5" stroke-width="0.900"/>
<circle cx="1024.500" cy="152.500" r="3" fill="#f4d060" stroke="#8a6a10" stroke-width="0.700"/><path d="M1013 160.500 L1017 158.500" stroke="#f4d060" stroke-width="2"/>
<!-- mass props / balance -->
<path d="M1047 145 V159 M1040 149.500 H1054" stroke="#3f7fa5" stroke-width="1.600"/><path d="M1042.500 162.500 Q1047 156 1051.500 162.500Z" fill="#8cc0dc" stroke="#3f7fa5" stroke-width="0.800"/>
<path d="M1038.500 153.500 h5.500 l-0.700 2.500 h-4.100z M1050 153.500 h5.500 l-0.700 2.500 h-4.100z" fill="#f4d080" stroke="#8a6a10" stroke-width="0.700"/>
<!-- table -->
<rect x="1064.500" y="145.500" width="17" height="17" fill="#fafafa" stroke="#8a8a8a" stroke-width="1"/><rect x="1065" y="146" width="16" height="3" fill="#5f9bbd"/>
<path d="M1070 149 V162.500 M1076 149 V162.500 M1064.500 153.500 H1081.500 M1064.500 158 H1081.500" stroke="#9a9a9a" stroke-width="0.900"/>
<path d="M1090 152.500 h5 l-2.500 3z" fill="#8a8a8a"/>
<!-- last -->
<rect x="1104.500" y="148.500" width="8" height="8" fill="#f4d060" stroke="#8a6a10" stroke-width="0.800"/><rect x="1112.500" y="154.500" width="8" height="8" rx="1" fill="#a8d0e8" stroke="#3f7fa5" stroke-width="0.800"/>
<path d="M1116 149.500 l3 -3 M1118 152 l3.500 -1 M1113.500 148 l0.500 -3 M1107 158.500 l-2.500 1.500 M1109 160 l-1.500 3" stroke="#e05040" stroke-width="0.900"/>
</svg>
<!-- viewport window controls -->
<svg style="left:1345px;top:122px" width="130" height="20" viewBox="1345 122 130 20" fill="none" stroke="#9a9a9a" stroke-width="1">
<rect x="1352.500" y="126.500" width="10.500" height="11"/><path d="M1354 132 l3 -2.300 v4.600z" fill="#9a9a9a" stroke="none"/>
<rect x="1378.500" y="126.500" width="10.500" height="11"/><path d="M1387.500 132 l-3 -2.300 v4.600z" fill="#9a9a9a" stroke="none"/>
<path d="M1405.500 136.500 h9.500" stroke-width="1.400"/>
<path d="M1429.500 130.500 h9 v7 h-9z M1433 130.500 v-3.500 h10.500 v7 h-5" />
<path d="M1457 126.500 l10 10 M1467 126.500 l-10 10" stroke-width="1.200"/>
</svg>
<style>
#rp{left:1482px;top:117px;width:438px;height:896px;background:#f7f7f7}
.gb{position:absolute;left:1487px;width:418px;border:1px solid #2b2b2b;border-top:1px solid #a8a8a8;border-bottom:2px solid #2b2b2b;background:#f7f7f7}
.gt{position:absolute;left:1494px;font-size:11px;font-weight:bold;line-height:14px;height:14px;white-space:nowrap;color:#111}
.cb{position:absolute;left:1492px;width:403px;height:21px;border:1px solid #d4d4d4;border-bottom-color:#c4c4c4;background:#fdfdfd;border-radius:1px}
.inp{position:absolute;height:22px;border:1px solid #e4e4e4;border-bottom:1px solid #8a8a8a;background:#fff;border-radius:2px}
.btn{position:absolute;border:1px solid #d0d0d0;border-bottom-color:#bdbdbd;background:#fdfdfd;border-radius:3px;text-align:center;font-size:13px;white-space:nowrap}
.lb{position:absolute;white-space:nowrap;line-height:16px;height:16px;font-size:13px}
.l12{font-size:11px}
</style>
<div class="abs" id="rp"></div>
<div class="abs" style="left:1481px;top:117px;width:1px;height:896px;background:#b8b8b8"></div>
<div class="abs" style="left:1482px;top:117px;width:438px;height:21px;background:#aeafb3"></div>
<div class="abs" style="left:1482px;top:137.5px;width:438px;height:1.5px;background:#2e2e2e"></div>
<div class="t c" style="left:1482px;width:420px;top:119px;font-weight:bold;font-size:12.5px;color:#111">Costing</div>
<svg style="left:0;top:0" width="1920" height="165" viewBox="0 0 1920 165"><path d="M1496 122.500 L1492 126.500 L1496 130.500 M1501.500 122.500 L1497.500 126.500 L1501.500 130.500" fill="none" stroke="#1c1c1c" stroke-width="1.700"/><g transform="translate(1889 127)"><path d="M-1.600 -8 h3.200 l.5 2.100 l1.800 .8 l1.900 -1.100 l2.200 2.200 l-1.100 1.900 l.8 1.800 l2.100 .5 v3.200 l-2.100 .5 l-.8 1.800 l1.100 1.900 l-2.200 2.200 l-1.900 -1.100 l-1.800 .8 l-.5 2.100 h-3.200 l-.5 -2.100 l-1.800 -.8 l-1.900 1.100 l-2.200 -2.200 l1.100 -1.900 l-.8 -1.800 l-2.100 -.5 v-3.200 l2.100 -.5 l.8 -1.800 l-1.100 -1.900 l2.200 -2.200 l1.900 1.100 l1.800 -.8z" fill="#fafafa" stroke="#2e2e2e" stroke-width="1.100" stroke-linejoin="round" transform="scale(0.92)"/><circle r="2.900" fill="#aeafb3" stroke="#2e2e2e" stroke-width="1.100"/></g><g transform="translate(1901.500 119.500)"><path d="M8.500 1 L14 6.500 L12.300 7 L10 9.300 L10.300 12.200 L8.800 12.400 L2.600 6.200 L2.800 4.700 L5.700 5 L8 2.700Z" fill="#1c1c1c"/><path d="M5.200 9.200 L1 14 L5.800 9.800Z" fill="#1c1c1c" stroke="#1c1c1c" stroke-width="1"/></g><g fill="#e2e2e2" stroke="#555" stroke-width="0.900"><path d="M1489 144.500 V153 Q1489 155.500 1496 155.500 Q1503 155.500 1503 153 V144.500"/><ellipse cx="1496" cy="153" rx="7" ry="2.200"/><ellipse cx="1496" cy="150.200" rx="7" ry="2.200"/><ellipse cx="1496" cy="147.400" rx="7" ry="2.200"/><ellipse cx="1496" cy="144.600" rx="7" ry="2.500"/></g><circle cx="1502" cy="155" r="3.600" fill="#1c1c1c"/><circle cx="1502" cy="155" r="1.300" fill="#f7f7f7"/><g stroke="#1c1c1c" stroke-width="1.500"><path d="M1502 150.500 v9 M1497.500 155 h9 M1498.800 151.800 l6.400 6.400 M1505.200 151.800 l-6.400 6.400"/></g><circle cx="1502" cy="155" r="1.300" fill="#f7f7f7"/><circle cx="1891" cy="150" r="8.300" fill="#fcfcfc" stroke="#3c3c3c" stroke-width="1.100"/><text x="1891" y="155" font-family="Liberation Sans,sans-serif" font-weight="bold" font-size="13.500" text-anchor="middle" fill="#1f6aa0">?</text><path d="M1908.500 146.500 l8 8 M1916.500 146.500 l-8 8" stroke="#e02010" stroke-width="2.200"/></svg>
<div class="abs" style="left:1906px;top:161px;width:14px;height:852px;background:#f0f0f0"></div>
<div class="abs" style="left:1913px;top:178px;width:2px;height:640px;background:#6a6a6a"></div>
<div class="abs" style="left:1886px;top:1004px;width:13px;height:9px;background:#f0f0f0;border:1px solid #bbb"></div><div class="abs" style="left:1889.500px;top:1007px;width:0;height:0;border-left:3px solid transparent;border-right:3px solid transparent;border-bottom:3.500px solid #333"></div>
<div class="gb" style="top:161px;height:55px"></div>
<div class="gt" style="top:167px">方法</div>
<svg style="left:1883px;top:169px" width="14" height="9" viewBox="0 0 14 9"><path d="M2 7 L7 2 L12 7" fill="none" stroke="#555" stroke-width="1.800"/></svg>
<div class="cb" style="top:190px;left:1492px;width:403px"></div>
<div class="lb" style="left:1496px;top:192.5px;font-size:13px">加工</div>
<svg style="left:1881px;top:197px" width="10" height="7" viewBox="0 0 10 7"><path d="M1 1.500 L5 5.500 L9 1.500" fill="none" stroke="#444" stroke-width="1.100"/></svg>
<div class="gb" style="top:225px;height:83px"></div>
<div class="gt" style="top:231px">模板</div>
<svg style="left:1883px;top:233px" width="14" height="9" viewBox="0 0 14 9"><path d="M2 7 L7 2 L12 7" fill="none" stroke="#555" stroke-width="1.800"/></svg>
<div class="cb" style="top:254px;left:1492px;width:403px"></div>
<div class="lb" style="left:1496px;top:256.5px;font-size:11.7px">machiningtemplate_default(englishstandard)</div>
<svg style="left:1881px;top:261px" width="10" height="7" viewBox="0 0 10 7"><path d="M1 1.500 L5 5.500 L9 1.500" fill="none" stroke="#444" stroke-width="1.100"/></svg>
<div class="btn" style="left:1493px;top:281px;width:401px;height:21px;line-height:19px">启动模板编辑器...</div>
<div class="gb" style="top:317px;height:100px;background:#00ff00"></div>
<div class="gt" style="top:323px">消息</div>
<svg style="left:1883px;top:325px" width="14" height="9" viewBox="0 0 14 9"><path d="M2 7 L7 2 L12 7" fill="none" stroke="#3a7a3a" stroke-width="1.800"/></svg>
<div class="abs" style="left:1496px;top:341.500px;width:402px;font-size:13px;line-height:12.500px;color:#0a2a0a">该零件已准备好进行估算。选择想要使用的方法和其他准则，然后选<br>择“开始成本估算”以继续。</div>
<div class="btn" style="left:1497px;top:397px;width:398px;height:17px;line-height:15px;border-radius:4px;border-color:#e8e8e8;background:#fefefe">开始成本估算</div>
<div class="gb" style="top:427px;height:215px"></div>
<div class="gt" style="top:433px">材料</div>
<svg style="left:1883px;top:435px" width="14" height="9" viewBox="0 0 14 9"><path d="M2 7 L7 2 L12 7" fill="none" stroke="#555" stroke-width="1.800"/></svg>
<div class="lb" style="left:1492px;top:454px">类:</div>
<div class="cb" style="top:474px;left:1492px;width:403px"></div>
<div class="lb" style="left:1496px;top:476.5px;font-size:13px">铝合金</div>
<svg style="left:1881px;top:481px" width="10" height="7" viewBox="0 0 10 7"><path d="M1 1.500 L5 5.500 L9 1.500" fill="none" stroke="#444" stroke-width="1.100"/></svg>
<div class="lb" style="left:1492px;top:499px">名称:</div>
<div class="cb" style="top:518px;left:1492px;width:403px"></div>
<div class="lb" style="left:1496px;top:520.5px;font-size:13px"><span style="font-size:11px">6061</span> 合金</div>
<svg style="left:1881px;top:525px" width="10" height="7" viewBox="0 0 10 7"><path d="M1 1.500 L5 5.500 L9 1.500" fill="none" stroke="#444" stroke-width="1.100"/></svg>
<div class="abs" style="left:1813px;top:544px;width:82px;height:27px;border:1px solid #1c1c1c;border-radius:3px;background:#f3f3f3"></div>
<svg style="left:1816px;top:547px" width="24" height="22" viewBox="0 0 24 22"><defs><radialGradient id="sg" cx="0.35" cy="0.3" r="0.8"><stop offset="0" stop-color="#fff"/><stop offset="0.600" stop-color="#bdbdbd"/><stop offset="1" stop-color="#777"/></radialGradient></defs><circle cx="11" cy="10.500" r="8.300" fill="url(#sg)" stroke="#555" stroke-width="0.800"/><ellipse cx="15" cy="7.500" rx="2.600" ry="4.800" transform="rotate(-30 15 7.500)" fill="#1c1c1c"/><circle cx="17.500" cy="17" r="3.300" fill="#1c1c1c"/><g stroke="#1c1c1c" stroke-width="1.400"><path d="M17.500 13 v8 M13.500 17 h8 M14.700 14.200 l5.600 5.600 M20.300 14.200 l-5.600 5.600"/></g><circle cx="17.500" cy="17" r="1.200" fill="#f3f3f3"/></svg>
<div class="lb" style="left:1842px;top:549.5px">设定材...</div>
<div class="lb" style="left:1492px;top:575.5px">材料成本:</div>
<div class="inp" style="left:1492px;top:595px;width:334px;height:23px"></div>
<div class="lb" style="left:1495px;top:596px"><span style="font-size:10.700px">4.58</span></div>
<div class="lb" style="left:1833px;top:599px"><span style="font-size:11px">USD/</span>磅</div>
<svg style="left:1878px;top:596px" width="20" height="22" viewBox="0 0 20 22"><path d="M2.500 2 V13" stroke="#bdbdbd" stroke-width="1.600"/><path d="M6 8 L10.500 3.500 L10.500 6.500 Q18 7 18 13 Q18 18 11.500 19 L11.500 16.500 Q15.500 16 15.500 13 Q15.500 9.500 10.500 9.300 L10.500 12.500Z" fill="#d6d6d6" stroke="#b5b5b5" stroke-width="0.800"/></svg>
<div class="lb" style="left:1492px;top:622.5px">重量:&nbsp;&nbsp; <span style="font-size:11px">5.58</span> 磅</div>
<div class="gb" style="top:651px;height:295px"></div>
<div class="gt" style="top:657px">配料实体</div>
<svg style="left:1883px;top:659px" width="14" height="9" viewBox="0 0 14 9"><path d="M2 7 L7 2 L12 7" fill="none" stroke="#555" stroke-width="1.800"/></svg>
<div class="lb" style="left:1492px;top:678px">类型:</div>
<div class="cb" style="top:698px;left:1492px;width:408px"></div>
<div class="lb" style="left:1496px;top:700.5px;font-size:13px">块</div>
<svg style="left:1886px;top:705px" width="10" height="7" viewBox="0 0 10 7"><path d="M1 1.500 L5 5.500 L9 1.500" fill="none" stroke="#444" stroke-width="1.100"/></svg>
<div class="abs" style="left:1492px;top:725px;width:12px;height:12px;border:1px solid #666;background:#fff"></div>
<div class="lb" style="left:1510px;top:723px">输入特定大小</div>
<div class="lb" style="left:1492px;top:754px;letter-spacing:-0.16px"><span class="l12">X:&nbsp;&nbsp;&nbsp;&nbsp;</span><span class="l12">2.99</span> 英寸 <span class="l12">2.99</span> 英寸 <span class="l12">2.99</span> 英寸 <span class="l12">2.99</span> 英寸 <span class="l12">2...</span> <span class="l12">2.99</span> 英寸</div>
<div class="lb" style="left:1492px;top:777px;letter-spacing:-0.16px"><span class="l12">Y:&nbsp;&nbsp;&nbsp;&nbsp;</span><span class="l12">4.50</span> 英寸 <span class="l12">4.50</span> 英寸 <span class="l12">4.50</span> 英寸 <span class="l12">4.50</span> 英寸 <span class="l12">4...</span> <span class="l12">4.50</span> 英寸</div>
<div class="lb" style="left:1492px;top:800px;letter-spacing:-0.16px"><span class="l12">Z:&nbsp;&nbsp;&nbsp;&nbsp;</span><span class="l12">4.25</span> 英寸 <span class="l12">4.25</span> 英寸 <span class="l12">4.25</span> 英寸 <span class="l12">4.25</span> 英寸 <span class="l12">4...</span> <span class="l12">4.25</span> 英寸</div>
<div class="lb" style="left:1492px;top:822px">以下位置处的附加配料:</div>
<div class="lb" style="left:1492px;top:846.5px"><span style="font-size:11px">-X</span></div>
<div class="inp" style="left:1507px;top:843.0px;width:193px;height:22px"></div>
<div class="lb" style="left:1510px;top:844.0px"><span class="l12">0.00</span> 英寸</div>
<div class="lb" style="left:1707px;top:846.5px"><span style="font-size:11px">+X</span></div>
<div class="inp" style="left:1725px;top:843.0px;width:175px;height:22px"></div>
<div class="lb" style="left:1728px;top:844.0px"><span class="l12">0.00</span> 英寸</div>
<div class="lb" style="left:1492px;top:874px"><span style="font-size:11px">-Y</span></div>
<div class="inp" style="left:1507px;top:870.5px;width:193px;height:22px"></div>
<div class="lb" style="left:1510px;top:871.5px"><span class="l12">0.00</span> 英寸</div>
<div class="lb" style="left:1707px;top:874px"><span style="font-size:11px">+Y</span></div>
<div class="inp" style="left:1725px;top:870.5px;width:175px;height:22px"></div>
<div class="lb" style="left:1728px;top:871.5px"><span class="l12">0.00</span> 英寸</div>
<div class="lb" style="left:1492px;top:902px"><span style="font-size:11px">-Z</span></div>
<div class="inp" style="left:1507px;top:898.5px;width:193px;height:22px"></div>
<div class="lb" style="left:1510px;top:899.5px"><span class="l12">0.00</span> 英寸</div>
<div class="lb" style="left:1707px;top:902px"><span style="font-size:11px">+Z</span></div>
<div class="inp" style="left:1725px;top:898.5px;width:175px;height:22px"></div>
<div class="lb" style="left:1728px;top:899.5px"><span class="l12">0.00</span> 英寸</div>
<div class="abs" style="left:1492px;top:927px;width:12px;height:12px;border:1px solid #444;background:#fff"></div>
<svg style="left:1493px;top:928px" width="11" height="11" viewBox="0 0 11 11"><path d="M2 5.500 L4.500 8.500 L9 2.500" fill="none" stroke="#111" stroke-width="1.800"/></svg>
<div class="lb" style="left:1510px;top:925.5px">预览配料</div>
<div class="gb" style="top:956px;height:60px;border-bottom:none"></div>
<div class="gt" style="top:961.500px">数量</div>
<svg style="left:1883px;top:964px" width="14" height="9" viewBox="0 0 14 9"><path d="M2 7 L7 2 L12 7" fill="none" stroke="#555" stroke-width="1.800"/></svg>
<div class="lb" style="left:1492px;top:983px">零件总数量:</div>
<div class="inp" style="left:1492px;top:1004px;width:393px;height:12px;border-bottom:none"></div>
<div class="lb" style="left:1496px;top:1007px;font-size:11.500px">100</div>
<div class="abs" style="left:1455px;top:167px;width:27px;height:145px;background:#d2d2d2;border:1px solid #a8a8a8;border-right:none"></div>
<div class="abs" style="left:1455px;top:190px;width:27px;height:1px;background:#a8a8a8"></div>
<div class="abs" style="left:1455px;top:214px;width:27px;height:1px;background:#a8a8a8"></div>
<div class="abs" style="left:1455px;top:238px;width:27px;height:1px;background:#a8a8a8"></div>
<div class="abs" style="left:1455px;top:262px;width:27px;height:1px;background:#a8a8a8"></div>
<div class="abs" style="left:1455px;top:286px;width:27px;height:1px;background:#a8a8a8"></div>
<div class="abs" style="left:1455px;top:311px;width:28px;height:25px;background:#f7f7f7;border:1px solid #a8a8a8;border-right:none"></div>
<svg style="left:0;top:0" width="1920" height="340" viewBox="0 0 1920 340"><path d="M1459 179.500 L1468 171 L1477 179.500" fill="none" stroke="#1e5f8c" stroke-width="1.700"/><path d="M1461.500 179 L1468 173 L1474.500 179 V187 H1461.500Z" fill="#fff" stroke="#333" stroke-width="1.100"/><rect x="1466.500" y="181.500" width="3.600" height="5.500" fill="#fff" stroke="#333" stroke-width="0.900"/><g fill="#f6f6f6" stroke="#333" stroke-width="1"><path d="M1461 197.500 L1465 195 L1468 196 L1471 194 L1474.500 195.500 V207.500 L1468 211 L1461 208Z"/><path d="M1461 197.500 L1464.500 199.500 V209.500 M1464.500 199.500 L1468 197.500 M1468 196 L1468 211 M1468 198.500 L1471.500 197 V209 M1471.500 197 L1474.500 195.500"/></g><path d="M1458.500 232.500 V218.500 H1464 L1465.500 220.500 H1472.500 V223" fill="#f4f4f4" stroke="#333" stroke-width="1.100"/><path d="M1458.500 232.500 L1462.500 222.500 H1477.500 L1473.500 232.500Z" fill="#f2f2f2" stroke="#333" stroke-width="1.100"/><rect x="1460.500" y="243.500" width="15" height="14" fill="#fdfdfd" stroke="#333" stroke-width="1.100"/><g fill="#f0b820" stroke="#6b5200" stroke-width="0.700"><rect x="1462.500" y="245.500" width="6" height="3"/><rect x="1470" y="245.500" width="3.500" height="3"/><path d="M1462.500 251 h3.500 v2.500 h3 v-2.500 h-0 v0 h0 M1462.500 251 v5 h9 v-2.500 h-2.500 v-2.500z"/></g><circle cx="1468" cy="274" r="8" fill="#e8e8e8"/><path d="M1468 274 L1468 266 A8 8 0 0 0 1460 274Z" fill="#3a6fd0"/><path d="M1468 274 L1460 274 A8 8 0 0 0 1468 282Z" fill="#3fae3a"/><path d="M1468 274 L1468 282 A8 8 0 0 0 1476 274Z" fill="#f0c020"/><path d="M1468 274 L1476 274 A8 8 0 0 0 1468 266Z" fill="#d63020"/><circle cx="1465.500" cy="271" r="2.500" fill="#fff" opacity="0.350"/><rect x="1460.500" y="290.500" width="15" height="16" fill="#fdfdfd" stroke="#23527a" stroke-width="1.200"/><rect x="1461" y="291" width="14" height="2.800" fill="#3b8fc6"/><g fill="#2b7bb0"><rect x="1462.500" y="295.300" width="3" height="2.400"/><rect x="1462.500" y="299" width="3" height="2.400"/><rect x="1462.500" y="302.700" width="3" height="2.400"/></g><path d="M1467 296.500 h7 M1467 300.200 h7 M1467 303.900 h7" stroke="#333" stroke-width="1"/><g fill="#e9e9e9" stroke="#3a3a3a" stroke-width="1"><rect x="1464.500" y="326.500" width="11" height="3.400" rx="1.700"/><rect x="1465" y="324" width="11" height="3.400" rx="1.700"/><rect x="1464.500" y="321.500" width="11" height="3.400" rx="1.700"/><rect x="1465" y="319" width="11" height="3.400" rx="1.700"/><ellipse cx="1470.300" cy="318.600" rx="5.500" ry="1.900"/><ellipse cx="1462.500" cy="325.300" rx="2.300" ry="5.500" transform="rotate(32 1462.500 325.300)"/></g></svg>
<!-- status bar -->
<div class="abs" style="left:0;top:1013px;width:1920px;height:1px;background:#8e8e8e"></div>
<div class="abs" style="left:0;top:1014px;width:1920px;height:19px;background:#f7f7f7"></div><div class="abs" style="left:0;top:1032px;width:1920px;height:1px;background:#b4b4b4"></div>
<div class="t" style="left:1px;top:1017px;font-size:12px;letter-spacing:0.1px">SOLIDWORKS Premium 2024 SP5.0</div>
<div class="t" style="left:1636px;top:1017px;font-size:12.2px">在编辑 零件</div>
<div class="t" style="left:1814px;top:1017px;font-size:12px;letter-spacing:0.2px">MMGS</div>
<div class="abs" style="left:1868px;top:1022px;width:0;height:0;border-left:3px solid transparent;border-right:3px solid transparent;border-bottom:3.500px solid #333"></div>
<svg style="left:1900px;top:1015px" width="19" height="17" viewBox="0 0 19 17"><path d="M2 6 L12 2 L17.500 6.500 V10.500 L8 15.500 L2 10Z" fill="#ececec" stroke="#444" stroke-width="1" stroke-linejoin="round"/><path d="M2 6 L8 11 L17.500 6.500 M8 11 V15.500" fill="none" stroke="#444" stroke-width="0.900"/><ellipse cx="10" cy="6.500" rx="3" ry="1.700" fill="none" stroke="#444" stroke-width="0.900"/></svg>
</body>
</html>
